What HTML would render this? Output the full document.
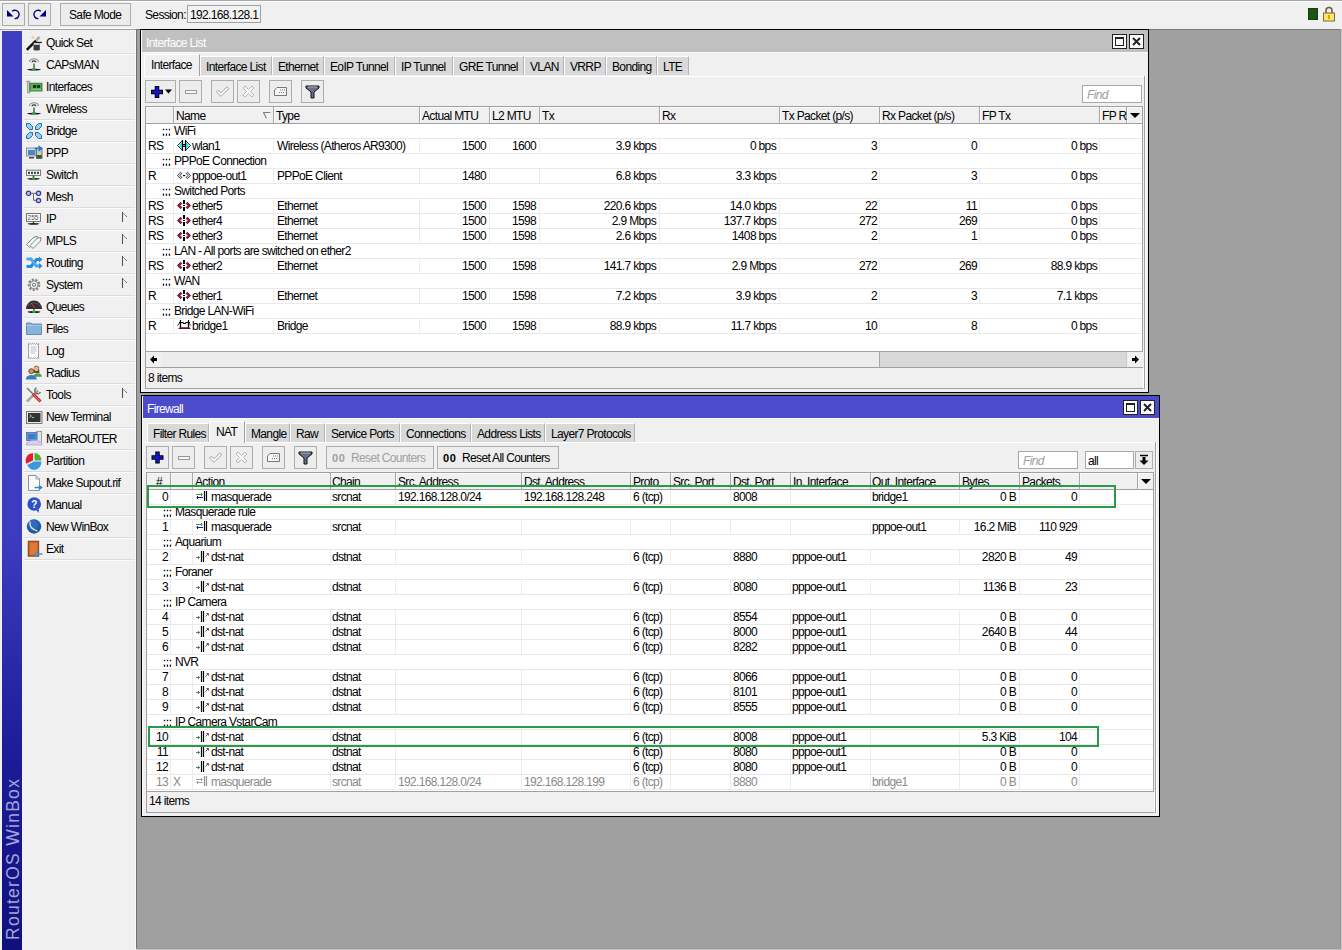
<!DOCTYPE html>
<html><head><meta charset="utf-8"><style>
html,body{margin:0;padding:0}
body{width:1342px;height:950px;overflow:hidden;position:relative;background:#f0f0f0;font-family:'Liberation Sans',sans-serif;font-size:12px;letter-spacing:-0.65px;color:#000}
body>div{position:absolute}
.t{position:absolute;white-space:nowrap;line-height:15px;height:15px}
svg{overflow:visible}
</style></head><body>
<div style="left:0px;top:0px;width:1342px;height:1px;background:#a8a8a8"></div>
<div style="left:0px;top:1px;width:1342px;height:1px;background:#ffffff"></div>
<div style="left:2px;top:3px;width:23px;height:23px;box-sizing:border-box;border:1px solid #adadad;background:#ececec;"></div>
<div style="left:28px;top:3px;width:23px;height:23px;box-sizing:border-box;border:1px solid #adadad;background:#ececec;"></div>
<div style="left:60px;top:3px;width:71px;height:23px;box-sizing:border-box;border:1px solid #adadad;background:#ececec;"></div>
<svg style="position:absolute;left:2px;top:3px" width="23" height="23" viewBox="0 0 23 23"><path d="M10.2 8.2 A4.2 4.2 0 1 1 12.6 15.6" fill="none" stroke="#000080" stroke-width="1.4"/><path d="M5 7 L5 13.5 L11.5 13.5 Z" fill="#000080"/></svg>
<svg style="position:absolute;left:28px;top:3px" width="23" height="23" viewBox="0 0 23 23"><path d="M12.8 8.2 A4.2 4.2 0 1 0 10.4 15.6" fill="none" stroke="#000080" stroke-width="1.4"/><path d="M18 7 L18 13.5 L11.5 13.5 Z" fill="#000080"/></svg>
<div class="t" style="left:69px;top:8px;">Safe Mode</div>
<div class="t" style="left:145px;top:8px;">Session:</div>
<div style="left:187px;top:5px;width:74px;height:18px;box-sizing:border-box;border:1px solid #a0a0a0;background:#f2f2f2"></div>
<div class="t" style="left:190px;top:8px;">192.168.128.1</div>
<div style="left:0px;top:28px;width:136px;height:1px;background:#ffffff"></div>
<div style="left:0px;top:29px;width:136px;height:1px;background:#a0a0a0"></div>
<div style="left:1308px;top:8px;width:10px;height:12px;background:#1f5512;border:1px solid #173d0d;box-sizing:border-box"></div>
<svg style="position:absolute;left:1322px;top:6px" width="14" height="16" viewBox="0 0 14 16"><path d="M4 7 V4.5 A3 3 0 0 1 10 4.5 V7" fill="none" stroke="#6b5a3a" stroke-width="1.5"/><rect x="1.5" y="7" width="11" height="8" fill="#ffe36a" stroke="#7a6a40" stroke-width="1"/><rect x="6" y="9" width="2" height="4" fill="#d4a800"/></svg>
<div style="left:2px;top:31px;width:20px;height:919px;background:linear-gradient(#3e3ec2 0%,#3c3cc0 55%,#1c1c98 79%,#10107c 100%)"></div>
<div class="t" style="left:2.9px;top:940px;height:20px;line-height:20px;font-size:17.5px;color:#a4a4d6;transform-origin:0 0;transform:rotate(-90deg);letter-spacing:1.28px">RouterOS WinBox</div>
<div style="left:22px;top:30px;width:114px;height:920px;background:#f0f0f0"></div>
<svg style="position:absolute;left:24px;top:33px" width="20" height="20" viewBox="0 0 20 20"><path d="M2.8 16.8 L12 7.6" stroke="#111" stroke-width="2.6"/><path d="M12.3 7.3 L15.6 4" stroke="#777" stroke-width="2.2"/><path d="M12.3 7.3 L15.6 4" stroke="#f4f4f4" stroke-width="0.9"/><path d="M9.5 10 H15.8 V17 Q12.6 18.2 9.5 17 Z" fill="#3c3c3c"/><rect x="9.7" y="10" width="6" height="1.8" fill="#e8e8e8"/><rect x="9.3" y="8.8" width="8.6" height="1.3" fill="#222"/><path d="M9 2.6 V6.4 M7.1 4.5 H10.9" stroke="#e4d470" stroke-width="1"/></svg>
<div class="t" style="left:46px;top:36px;">Quick Set</div>
<div style="left:24px;top:53px;width:111px;height:1px;background:#dcdcdc"></div>
<div style="left:24px;top:54px;width:111px;height:1px;background:#fbfbfb"></div>
<svg style="position:absolute;left:24px;top:55px" width="20" height="20" viewBox="0 0 20 20"><path d="M5.5 7 A4.5 3.2 0 0 1 14.5 7" fill="none" stroke="#8a8a8a" stroke-width="1.1"/><path d="M8 7.3 A2 1.5 0 0 1 12 7.3" fill="none" stroke="#333" stroke-width="1.2"/><path d="M10 8.5 V13.5" stroke="#5a6a5a" stroke-width="1.6"/><ellipse cx="10" cy="14.6" rx="7" ry="0.9" fill="#1a1a1a"/><ellipse cx="10" cy="14.4" rx="2" ry="1.4" fill="#3a9a4a"/></svg>
<div class="t" style="left:46px;top:58px;">CAPsMAN</div>
<div style="left:24px;top:75px;width:111px;height:1px;background:#dcdcdc"></div>
<div style="left:24px;top:76px;width:111px;height:1px;background:#fbfbfb"></div>
<svg style="position:absolute;left:24px;top:77px" width="20" height="20" viewBox="0 0 20 20"><path d="M2.8 4.2 H5.8 V16 H3.6 V5.2 H2.8 Z" fill="#d0d0d0" stroke="#808080" stroke-width="0.7"/><rect x="5.8" y="6.2" width="12.2" height="7.8" fill="#5cae5c" stroke="#2a6a2a" stroke-width="0.8"/><rect x="9" y="8" width="3.2" height="3" fill="#0a3a12"/><rect x="13" y="8" width="3.2" height="3" fill="#0a3a22"/><path d="M7.5 12.8 H17.5" stroke="#c8f080" stroke-width="1.1" stroke-dasharray="1 1"/></svg>
<div class="t" style="left:46px;top:80px;">Interfaces</div>
<div style="left:24px;top:97px;width:111px;height:1px;background:#dcdcdc"></div>
<div style="left:24px;top:98px;width:111px;height:1px;background:#fbfbfb"></div>
<svg style="position:absolute;left:24px;top:99px" width="20" height="20" viewBox="0 0 20 20"><path d="M5.5 7 A4.5 3.2 0 0 1 14.5 7" fill="none" stroke="#8a8a8a" stroke-width="1.1"/><path d="M8 7.3 A2 1.5 0 0 1 12 7.3" fill="none" stroke="#333" stroke-width="1.2"/><path d="M10 8.5 V13.5" stroke="#5a6a5a" stroke-width="1.6"/><ellipse cx="10" cy="14.6" rx="7" ry="0.9" fill="#1a1a1a"/><ellipse cx="10" cy="14.4" rx="2" ry="1.4" fill="#3a9a4a"/></svg>
<div class="t" style="left:46px;top:102px;">Wireless</div>
<div style="left:24px;top:119px;width:111px;height:1px;background:#dcdcdc"></div>
<div style="left:24px;top:120px;width:111px;height:1px;background:#fbfbfb"></div>
<svg style="position:absolute;left:24px;top:121px" width="20" height="20" viewBox="0 0 20 20"><g fill="#8ad4f8" stroke="#2a6aa8" stroke-width="1"><path d="M2.5 2.5 H5.5 L8.5 5.5 V8.5 H5.5 L2.5 5.5 Z"/><path d="M17.5 2.5 H14.5 L11.5 5.5 V8.5 H14.5 L17.5 5.5 Z"/><path d="M2.5 17.5 H5.5 L8.5 14.5 V11.5 H5.5 L2.5 14.5 Z"/><path d="M17.5 17.5 H14.5 L11.5 14.5 V11.5 H14.5 L17.5 14.5 Z"/></g></svg>
<div class="t" style="left:46px;top:124px;">Bridge</div>
<div style="left:24px;top:141px;width:111px;height:1px;background:#dcdcdc"></div>
<div style="left:24px;top:142px;width:111px;height:1px;background:#fbfbfb"></div>
<svg style="position:absolute;left:24px;top:143px" width="20" height="20" viewBox="0 0 20 20"><rect x="2.5" y="5" width="9.5" height="8" fill="#cfe0f4" stroke="#7a7a7a" stroke-width="0.8"/><rect x="4" y="7" width="7" height="5" fill="#4a86c8"/><rect x="5" y="14" width="5" height="1.5" fill="#444"/><rect x="12.5" y="5" width="5.5" height="10.5" fill="#c8d0b8" stroke="#555" stroke-width="0.8"/><rect x="12.8" y="12" width="5" height="3.3" fill="#3a5a3a"/><path d="M10.5 5.5 H17 M14.5 3 L17.5 5.5 L14.5 8" stroke="#2a78c8" stroke-width="1.6" fill="none"/></svg>
<div class="t" style="left:46px;top:146px;">PPP</div>
<div style="left:24px;top:163px;width:111px;height:1px;background:#dcdcdc"></div>
<div style="left:24px;top:164px;width:111px;height:1px;background:#fbfbfb"></div>
<svg style="position:absolute;left:24px;top:165px" width="20" height="20" viewBox="0 0 20 20"><rect x="2.5" y="5.2" width="14" height="5.2" fill="#fafafa" stroke="#777" stroke-width="1"/><g fill="#333"><rect x="4" y="6.8" width="2" height="2"/><rect x="7" y="6.8" width="2" height="2"/><rect x="10" y="6.8" width="2" height="2"/><rect x="13" y="6.8" width="2" height="2"/></g><path d="M9.5 10.5 V13.5" stroke="#1a5a1a" stroke-width="1.4"/><ellipse cx="9.5" cy="13.8" rx="6.5" ry="0.9" fill="#1a1a1a"/><ellipse cx="9.5" cy="13.6" rx="1.8" ry="1.3" fill="#3a9a4a"/></svg>
<div class="t" style="left:46px;top:168px;">Switch</div>
<div style="left:24px;top:185px;width:111px;height:1px;background:#dcdcdc"></div>
<div style="left:24px;top:186px;width:111px;height:1px;background:#fbfbfb"></div>
<svg style="position:absolute;left:24px;top:187px" width="20" height="20" viewBox="0 0 20 20"><path d="M6.5 6.3 H12.3 M9.5 6.3 V13.3 H12.3" fill="none" stroke="#6a6a6a" stroke-width="1"/><g fill="#b8c0f8" stroke="#3a3a88" stroke-width="1.2"><circle cx="4.5" cy="6.3" r="2.2"/><circle cx="14.5" cy="6.3" r="2.2"/><circle cx="14.5" cy="13.5" r="2.2"/></g></svg>
<div class="t" style="left:46px;top:190px;">Mesh</div>
<div style="left:24px;top:207px;width:111px;height:1px;background:#dcdcdc"></div>
<div style="left:24px;top:208px;width:111px;height:1px;background:#fbfbfb"></div>
<svg style="position:absolute;left:24px;top:209px" width="20" height="20" viewBox="0 0 20 20"><rect x="2.5" y="4.5" width="14" height="8" fill="#fafafa" stroke="#777" stroke-width="1"/><text x="3.6" y="11" font-size="6.5" font-family="Liberation Sans" fill="#555" letter-spacing="0">255</text><path d="M9.5 12.5 V14.5" stroke="#1a5a1a" stroke-width="1.3"/><ellipse cx="9.5" cy="14.8" rx="6" ry="0.9" fill="#1a1a1a"/></svg>
<div class="t" style="left:46px;top:212px;">IP</div>
<svg style="position:absolute;left:121px;top:212px" width="8" height="11" viewBox="0 0 8 11"><path d="M1.5 0 V10" stroke="#555" stroke-width="1.1" fill="none"/><path d="M1.5 0.5 L6.2 5.2" stroke="#555" stroke-width="1" fill="none" stroke-dasharray="1.2 0.5"/></svg>
<div style="left:24px;top:229px;width:111px;height:1px;background:#dcdcdc"></div>
<div style="left:24px;top:230px;width:111px;height:1px;background:#fbfbfb"></div>
<svg style="position:absolute;left:24px;top:231px" width="20" height="20" viewBox="0 0 20 20"><g fill="#f4f8f4" stroke="#777" stroke-width="0.9"><path d="M2.5 13.5 L10 6 L13.5 5.5 L13 9 L5.5 16.5 Z"/><path d="M6 17 L13.5 9.5 L17 9 L16.5 12.5 L9 20 Z" transform="translate(0,-2.5)"/></g></svg>
<div class="t" style="left:46px;top:234px;">MPLS</div>
<svg style="position:absolute;left:121px;top:234px" width="8" height="11" viewBox="0 0 8 11"><path d="M1.5 0 V10" stroke="#555" stroke-width="1.1" fill="none"/><path d="M1.5 0.5 L6.2 5.2" stroke="#555" stroke-width="1" fill="none" stroke-dasharray="1.2 0.5"/></svg>
<div style="left:24px;top:251px;width:111px;height:1px;background:#dcdcdc"></div>
<div style="left:24px;top:252px;width:111px;height:1px;background:#fbfbfb"></div>
<svg style="position:absolute;left:24px;top:253px" width="20" height="20" viewBox="0 0 20 20"><path d="M2.5 13.5 L7 13.5 L12.5 6.5 L16 6.5" fill="none" stroke="#2a88d8" stroke-width="3"/><path d="M2.5 6 L7 6 L12.5 13 L16 13" fill="none" stroke="#48a8f0" stroke-width="3"/><path d="M15 3.5 L18.5 6.5 L15 9.5 Z M15 10 L18.5 13 L15 16 Z" fill="#2a88d8"/></svg>
<div class="t" style="left:46px;top:256px;">Routing</div>
<svg style="position:absolute;left:121px;top:256px" width="8" height="11" viewBox="0 0 8 11"><path d="M1.5 0 V10" stroke="#555" stroke-width="1.1" fill="none"/><path d="M1.5 0.5 L6.2 5.2" stroke="#555" stroke-width="1" fill="none" stroke-dasharray="1.2 0.5"/></svg>
<div style="left:24px;top:273px;width:111px;height:1px;background:#dcdcdc"></div>
<div style="left:24px;top:274px;width:111px;height:1px;background:#fbfbfb"></div>
<svg style="position:absolute;left:24px;top:275px" width="20" height="20" viewBox="0 0 20 20"><circle cx="10" cy="9.8" r="5.2" fill="#f0f0f0" stroke="#888" stroke-width="2.2" stroke-dasharray="2.2 1.4"/><circle cx="10" cy="9.8" r="4" fill="none" stroke="#777" stroke-width="0.8"/><circle cx="10" cy="9.8" r="1.6" fill="#f4f4f4" stroke="#666" stroke-width="0.9"/></svg>
<div class="t" style="left:46px;top:278px;">System</div>
<svg style="position:absolute;left:121px;top:278px" width="8" height="11" viewBox="0 0 8 11"><path d="M1.5 0 V10" stroke="#555" stroke-width="1.1" fill="none"/><path d="M1.5 0.5 L6.2 5.2" stroke="#555" stroke-width="1" fill="none" stroke-dasharray="1.2 0.5"/></svg>
<div style="left:24px;top:295px;width:111px;height:1px;background:#dcdcdc"></div>
<div style="left:24px;top:296px;width:111px;height:1px;background:#fbfbfb"></div>
<svg style="position:absolute;left:24px;top:297px" width="20" height="20" viewBox="0 0 20 20"><path d="M2 12 A8 8.5 0 0 1 18 12 Z" fill="#3a2c32"/><path d="M4.5 9 A6 5 0 0 1 15.5 9" fill="none" stroke="#8a8a9a" stroke-width="0.8" stroke-dasharray="1 1"/><path d="M7 6 L11 11" stroke="#c04050" stroke-width="1"/><path d="M10 12 V14.5" stroke="#2a8a3a" stroke-width="1.5"/><ellipse cx="10" cy="15" rx="6.5" ry="0.9" fill="#1a1a1a"/><ellipse cx="10" cy="14.7" rx="1.8" ry="1.2" fill="#3aaa4a"/></svg>
<div class="t" style="left:46px;top:300px;">Queues</div>
<div style="left:24px;top:317px;width:111px;height:1px;background:#dcdcdc"></div>
<div style="left:24px;top:318px;width:111px;height:1px;background:#fbfbfb"></div>
<svg style="position:absolute;left:24px;top:319px" width="20" height="20" viewBox="0 0 20 20"><path d="M2.5 4 H7 L8 5 H17.5 V15.5 H2.5 Z" fill="#88b4dc" stroke="#5a84b0" stroke-width="0.9"/><path d="M2.5 6.5 H17.5" stroke="#a8cce8" stroke-width="0.8"/></svg>
<div class="t" style="left:46px;top:322px;">Files</div>
<div style="left:24px;top:339px;width:111px;height:1px;background:#dcdcdc"></div>
<div style="left:24px;top:340px;width:111px;height:1px;background:#fbfbfb"></div>
<svg style="position:absolute;left:24px;top:341px" width="20" height="20" viewBox="0 0 20 20"><path d="M4.5 2.5 L5.5 3.3 L6.5 2.5 L7.5 3.3 L8.5 2.5 L9.5 3.3 L10.5 2.5 L11.5 3.3 L12.5 2.5 L13.5 3.3 L14.5 2.5 V17.5 L13.5 16.7 L12.5 17.5 L11.5 16.7 L10.5 17.5 L9.5 16.7 L8.5 17.5 L7.5 16.7 L6.5 17.5 L5.5 16.7 L4.5 17.5 Z" fill="#fafafa" stroke="#8a8a8a" stroke-width="0.8"/><path d="M6.5 6 H12.5 M6.5 8 H12.5 M6.5 10 H12.5 M6.5 12 H11" stroke="#b8b8c8" stroke-width="0.9"/></svg>
<div class="t" style="left:46px;top:344px;">Log</div>
<div style="left:24px;top:361px;width:111px;height:1px;background:#dcdcdc"></div>
<div style="left:24px;top:362px;width:111px;height:1px;background:#fbfbfb"></div>
<svg style="position:absolute;left:24px;top:363px" width="20" height="20" viewBox="0 0 20 20"><path d="M10 4 A3 3.2 0 0 1 15 4.5 L15.5 10 H9.5 Z" fill="#7a4a2a"/><circle cx="12.3" cy="5.8" r="2.3" fill="#e8b888"/><path d="M9.5 13.8 A4 3.5 0 0 1 17.8 13.8 Z" fill="#3aaa5a"/><circle cx="7.3" cy="8.2" r="2.5" fill="#c89868" stroke="#5a3a1a" stroke-width="0.8"/><path d="M1.8 16.5 A5.5 4.5 0 0 1 12.8 16.5 Z" fill="#3a7ac0"/></svg>
<div class="t" style="left:46px;top:366px;">Radius</div>
<div style="left:24px;top:383px;width:111px;height:1px;background:#dcdcdc"></div>
<div style="left:24px;top:384px;width:111px;height:1px;background:#fbfbfb"></div>
<svg style="position:absolute;left:24px;top:385px" width="20" height="20" viewBox="0 0 20 20"><path d="M3 16.5 L14 5.5" stroke="#777" stroke-width="2.2"/><path d="M3 16.5 L14 5.5" stroke="#f0f0f0" stroke-width="0.8"/><path d="M12.5 3 A3 3 0 1 0 16.5 7" fill="none" stroke="#777" stroke-width="1.6"/><path d="M3 3 L9 9" stroke="#777" stroke-width="1.5"/><path d="M9 9 L16.5 16.5" stroke="#d02828" stroke-width="3"/><path d="M9.5 9.5 L16 16" stroke="#f08080" stroke-width="0.8"/></svg>
<div class="t" style="left:46px;top:388px;">Tools</div>
<svg style="position:absolute;left:121px;top:388px" width="8" height="11" viewBox="0 0 8 11"><path d="M1.5 0 V10" stroke="#555" stroke-width="1.1" fill="none"/><path d="M1.5 0.5 L6.2 5.2" stroke="#555" stroke-width="1" fill="none" stroke-dasharray="1.2 0.5"/></svg>
<div style="left:24px;top:405px;width:111px;height:1px;background:#dcdcdc"></div>
<div style="left:24px;top:406px;width:111px;height:1px;background:#fbfbfb"></div>
<svg style="position:absolute;left:24px;top:407px" width="20" height="20" viewBox="0 0 20 20"><rect x="2.5" y="4.5" width="15.5" height="12" fill="#e8e8e8" stroke="#7a7a7a" stroke-width="1"/><rect x="4" y="6" width="12.5" height="9" fill="#333"/><path d="M5.5 7.5 L7.5 9 L5.5 10.5 M8 10.5 H10" stroke="#ddd" stroke-width="0.8" fill="none"/></svg>
<div class="t" style="left:46px;top:410px;">New Terminal</div>
<div style="left:24px;top:427px;width:111px;height:1px;background:#dcdcdc"></div>
<div style="left:24px;top:428px;width:111px;height:1px;background:#fbfbfb"></div>
<svg style="position:absolute;left:24px;top:429px" width="20" height="20" viewBox="0 0 20 20"><rect x="12.8" y="2.5" width="4.8" height="12" fill="#e4e4e4" stroke="#888" stroke-width="0.8"/><rect x="2.5" y="3.5" width="10.5" height="8" fill="#5a9ae0" stroke="#5a6a8a" stroke-width="0.8"/><rect x="4" y="5" width="7.5" height="5" fill="#3a7ad0"/><path d="M2 16 Q2 12.5 5.5 12.8 Q7 10.5 10 11.5 Q13 10 15 12.5 Q18.5 12.5 18 16 Z" fill="#d8d0f0" stroke="#a8a0c8" stroke-width="0.7"/></svg>
<div class="t" style="left:46px;top:432px;">MetaROUTER</div>
<div style="left:24px;top:449px;width:111px;height:1px;background:#dcdcdc"></div>
<div style="left:24px;top:450px;width:111px;height:1px;background:#fbfbfb"></div>
<svg style="position:absolute;left:24px;top:451px" width="20" height="20" viewBox="0 0 20 20"><path d="M9 9.5 L9 2.2 A7.3 7.3 0 0 0 2.4 12.8 Z" fill="#e02030"/><path d="M10.5 8.5 L10.5 2 A7 7 0 0 1 17.3 9.5 L10.5 9.5 Z" fill="#50b030"/><path d="M10 10.5 L17.3 10.5 A7.3 7.3 0 0 1 3.2 14 Z" fill="#3a98e0"/></svg>
<div class="t" style="left:46px;top:454px;">Partition</div>
<div style="left:24px;top:471px;width:111px;height:1px;background:#dcdcdc"></div>
<div style="left:24px;top:472px;width:111px;height:1px;background:#fbfbfb"></div>
<svg style="position:absolute;left:24px;top:473px" width="20" height="20" viewBox="0 0 20 20"><path d="M4.5 2.5 H12 L15.5 6 V17.5 H4.5 Z" fill="#fafafa" stroke="#7a8a9a" stroke-width="0.9"/><path d="M12 2.5 V6 H15.5" fill="none" stroke="#7a8a9a" stroke-width="0.8"/><path d="M10.5 14.5 H17 M15 12.5 L17.5 14.5 L15 16.5" stroke="#2a88d8" stroke-width="1.6" fill="none"/></svg>
<div class="t" style="left:46px;top:476px;">Make Supout.rif</div>
<div style="left:24px;top:493px;width:111px;height:1px;background:#dcdcdc"></div>
<div style="left:24px;top:494px;width:111px;height:1px;background:#fbfbfb"></div>
<svg style="position:absolute;left:24px;top:495px" width="20" height="20" viewBox="0 0 20 20"><path d="M12.5 15 L14.5 18 L15 14 Z" fill="#2a48c0"/><circle cx="10.2" cy="9" r="6.8" fill="#3050c8"/><text x="7.2" y="13" font-size="10" font-weight="bold" font-family="Liberation Sans" fill="#fff" letter-spacing="0">?</text></svg>
<div class="t" style="left:46px;top:498px;">Manual</div>
<div style="left:24px;top:515px;width:111px;height:1px;background:#dcdcdc"></div>
<div style="left:24px;top:516px;width:111px;height:1px;background:#fbfbfb"></div>
<svg style="position:absolute;left:24px;top:517px" width="20" height="20" viewBox="0 0 20 20"><circle cx="10" cy="9.5" r="7.2" fill="#1e5aa8"/><circle cx="9" cy="8" r="5" fill="#3a7ac8" opacity="0.6"/><path d="M6 4.5 Q5 12 13.5 14" stroke="#e0ecf8" stroke-width="1.2" fill="none"/></svg>
<div class="t" style="left:46px;top:520px;">New WinBox</div>
<div style="left:24px;top:537px;width:111px;height:1px;background:#dcdcdc"></div>
<div style="left:24px;top:538px;width:111px;height:1px;background:#fbfbfb"></div>
<svg style="position:absolute;left:24px;top:539px" width="20" height="20" viewBox="0 0 20 20"><rect x="4.2" y="2.2" width="10.5" height="15" fill="#c86428" stroke="#7a3a10" stroke-width="0.9"/><rect x="6" y="4" width="7" height="11.5" fill="#e07838"/><path d="M11 15 H18.5 M13 13 L10.8 15 L13 17" stroke="#3a98e0" stroke-width="1.6" fill="none"/></svg>
<div class="t" style="left:46px;top:542px;">Exit</div>
<div style="left:24px;top:559px;width:111px;height:1px;background:#dcdcdc"></div>
<div style="left:24px;top:560px;width:111px;height:1px;background:#fbfbfb"></div>
<div style="left:136px;top:29px;width:1206px;height:921px;background:#a0a0a0"></div>
<div style="left:136px;top:29px;width:1px;height:921px;background:#707070"></div>
<div style="left:135px;top:30px;width:1px;height:920px;background:#fafafa"></div>
<div style="left:136px;top:29px;width:1206px;height:1px;background:#787878"></div>
<div style="left:1340px;top:29px;width:1px;height:920px;background:#989898"></div>
<div style="left:1341px;top:29px;width:1px;height:921px;background:#c6c6c6"></div>
<div style="left:136px;top:948px;width:1205px;height:1px;background:#989898"></div>
<div style="left:136px;top:949px;width:1206px;height:1px;background:#c2c2c2"></div>
<div style="left:140px;top:29px;width:1009px;height:364px;background:#000"></div>
<div style="left:141px;top:30px;width:1007px;height:362px;background:#f0f0f0"></div>
<div style="left:141px;top:30px;width:1px;height:362px;background:#fbfbfb"></div>
<div style="left:142px;top:30px;width:1006px;height:22px;background:#c0c0c0"></div>
<div style="left:141px;top:52px;width:1007px;height:1px;background:#fafafa"></div>
<div class="t" style="left:146px;top:36px;color:#ffffff">Interface List</div>
<div style="left:1112px;top:34px;width:15px;height:15px;box-sizing:border-box;border:1px solid #222;background:#fafafa"></div>
<div style="left:1129px;top:34px;width:15px;height:15px;box-sizing:border-box;border:1px solid #222;background:#fafafa"></div>
<svg style="position:absolute;left:1112px;top:34px" width="15" height="15" viewBox="0 0 15 15"><rect x="3.5" y="3.5" width="8" height="8" fill="none" stroke="#222" stroke-width="1"/><rect x="3" y="3" width="9" height="2" fill="#222"/></svg>
<svg style="position:absolute;left:1129px;top:34px" width="15" height="15" viewBox="0 0 15 15"><path d="M4 4 L11 11 M11 4 L4 11" stroke="#222" stroke-width="2"/></svg>
<div style="left:144px;top:76px;width:1001px;height:1px;background:#ffffff"></div>
<div style="left:1144px;top:76px;width:1px;height:313px;background:#a0a0a0"></div>
<div style="left:1145px;top:76px;width:1px;height:313px;background:#ffffff"></div>
<div style="left:144px;top:54px;width:56px;height:22px;background:#f0f0f0;box-sizing:border-box;border-left:1px solid #fff;border-top:1px solid #fff;border-right:1px solid #a0a0a0"></div>
<div class="t" style="left:151px;top:58px;">Interface</div>
<div style="left:200px;top:56px;width:72px;height:19px;background:#d9d9d9;box-sizing:border-box;border-left:1px solid #fff;border-top:1px solid #fff;border-right:1px solid #b4b4b4"></div>
<div class="t" style="left:206px;top:60px;">Interface List</div>
<div style="left:272px;top:56px;width:52px;height:19px;background:#d9d9d9;box-sizing:border-box;border-left:1px solid #fff;border-top:1px solid #fff;border-right:1px solid #b4b4b4"></div>
<div class="t" style="left:278px;top:60px;">Ethernet</div>
<div style="left:324px;top:56px;width:71px;height:19px;background:#d9d9d9;box-sizing:border-box;border-left:1px solid #fff;border-top:1px solid #fff;border-right:1px solid #b4b4b4"></div>
<div class="t" style="left:330px;top:60px;">EoIP Tunnel</div>
<div style="left:395px;top:56px;width:58px;height:19px;background:#d9d9d9;box-sizing:border-box;border-left:1px solid #fff;border-top:1px solid #fff;border-right:1px solid #b4b4b4"></div>
<div class="t" style="left:401px;top:60px;">IP Tunnel</div>
<div style="left:453px;top:56px;width:71px;height:19px;background:#d9d9d9;box-sizing:border-box;border-left:1px solid #fff;border-top:1px solid #fff;border-right:1px solid #b4b4b4"></div>
<div class="t" style="left:459px;top:60px;">GRE Tunnel</div>
<div style="left:524px;top:56px;width:40px;height:19px;background:#d9d9d9;box-sizing:border-box;border-left:1px solid #fff;border-top:1px solid #fff;border-right:1px solid #b4b4b4"></div>
<div class="t" style="left:530px;top:60px;">VLAN</div>
<div style="left:564px;top:56px;width:42px;height:19px;background:#d9d9d9;box-sizing:border-box;border-left:1px solid #fff;border-top:1px solid #fff;border-right:1px solid #b4b4b4"></div>
<div class="t" style="left:570px;top:60px;">VRRP</div>
<div style="left:606px;top:56px;width:51px;height:19px;background:#d9d9d9;box-sizing:border-box;border-left:1px solid #fff;border-top:1px solid #fff;border-right:1px solid #b4b4b4"></div>
<div class="t" style="left:612px;top:60px;">Bonding</div>
<div style="left:657px;top:56px;width:32px;height:19px;background:#d9d9d9;box-sizing:border-box;border-left:1px solid #fff;border-top:1px solid #fff;border-right:1px solid #b4b4b4"></div>
<div class="t" style="left:663px;top:60px;">LTE</div>
<div style="left:145px;top:80px;width:31px;height:23px;box-sizing:border-box;border:1px solid #adadad;background:#ededed"></div>
<svg style="position:absolute;left:145px;top:80px" width="31" height="23" viewBox="0 0 31 23"><path d="M12 6 V18 M6 12 H18" stroke="#000" stroke-width="4.5"/><path d="M12 7 V17 M7 12 H17" stroke="#1414d8" stroke-width="2.5"/><path d="M20 9.5 H27 L23.5 13.5 Z" fill="#000"/></svg>
<div style="left:179px;top:80px;width:23px;height:23px;box-sizing:border-box;border:1px solid #adadad;background:#ededed"></div>
<svg style="position:absolute;left:179px;top:80px" width="23" height="23" viewBox="0 0 23 23"><rect x="6.5" y="10.5" width="11" height="3" fill="#f6f6f6" stroke="#9a9a9a"/></svg>
<div style="left:211px;top:80px;width:23px;height:23px;box-sizing:border-box;border:1px solid #adadad;background:#ededed"></div>
<svg style="position:absolute;left:211px;top:80px" width="23" height="23" viewBox="0 0 23 23"><path d="M5.5 12 L7.3 10.2 L10 12.8 L16 6.8 L17.8 8.6 L10 16.4 Z" fill="#f8f8f8" stroke="#9a9a9a" stroke-width="0.9"/></svg>
<div style="left:237px;top:80px;width:23px;height:23px;box-sizing:border-box;border:1px solid #adadad;background:#ededed"></div>
<svg style="position:absolute;left:237px;top:80px" width="23" height="23" viewBox="0 0 23 23"><path d="M6 8 L8 6 L11.5 9.5 L15 6 L17 8 L13.5 11.5 L17 15 L15 17 L11.5 13.5 L8 17 L6 15 L9.5 11.5 Z" fill="#f6f6f6" stroke="#a8a8a8" stroke-width="0.8"/></svg>
<div style="left:269px;top:80px;width:23px;height:23px;box-sizing:border-box;border:1px solid #adadad;background:#ededed"></div>
<svg style="position:absolute;left:269px;top:80px" width="23" height="23" viewBox="0 0 23 23"><path d="M5.5 10 L8 7.5 H17.5 V15.5 H5.5 Z" fill="#f6f6f6" stroke="#777"/><path d="M11 10 H16 M10 12.5 H15" stroke="#777" stroke-dasharray="1 1"/></svg>
<div style="left:301px;top:80px;width:23px;height:23px;box-sizing:border-box;border:1px solid #adadad;background:#ededed"></div>
<svg style="position:absolute;left:301px;top:80px" width="23" height="23" viewBox="0 0 23 23"><path d="M5 6 H18 V8 L13 12 V18 H10 V12 L5 8 Z" fill="#6a7088" stroke="#111" stroke-width="1"/><path d="M7 7 H16" stroke="#aab" stroke-width="1"/></svg>
<div style="left:1082px;top:85px;width:60px;height:18px;box-sizing:border-box;border:1px solid #a8a8a8;background:#fff"></div>
<div class="t" style="left:1087px;top:88px;color:#a0a0a0;font-style:italic">Find</div>
<div style="left:145px;top:106px;width:998px;height:246px;background:#fff;box-sizing:border-box;border:1px solid #a0a0a0;border-right:none"></div>
<div style="left:145px;top:106px;width:998px;height:18px;background:#f0f0f0;box-sizing:border-box;border-top:1px solid #a0a0a0;border-bottom:1px solid #a0a0a0;border-left:1px solid #a0a0a0"></div>
<div style="left:1142px;top:106px;width:1px;height:246px;background:#a0a0a0"></div>
<div style="left:146px;top:107px;width:996px;height:1px;background:#fcfcfc"></div>
<div style="left:173px;top:107px;width:1px;height:16px;background:#a8a8a8"></div>
<div style="left:174px;top:108px;width:1px;height:15px;background:#fafafa"></div>
<div style="left:273px;top:107px;width:1px;height:16px;background:#a8a8a8"></div>
<div style="left:274px;top:108px;width:1px;height:15px;background:#fafafa"></div>
<div style="left:419px;top:107px;width:1px;height:16px;background:#a8a8a8"></div>
<div style="left:420px;top:108px;width:1px;height:15px;background:#fafafa"></div>
<div style="left:489px;top:107px;width:1px;height:16px;background:#a8a8a8"></div>
<div style="left:490px;top:108px;width:1px;height:15px;background:#fafafa"></div>
<div style="left:539px;top:107px;width:1px;height:16px;background:#a8a8a8"></div>
<div style="left:540px;top:108px;width:1px;height:15px;background:#fafafa"></div>
<div style="left:659px;top:107px;width:1px;height:16px;background:#a8a8a8"></div>
<div style="left:660px;top:108px;width:1px;height:15px;background:#fafafa"></div>
<div style="left:779px;top:107px;width:1px;height:16px;background:#a8a8a8"></div>
<div style="left:780px;top:108px;width:1px;height:15px;background:#fafafa"></div>
<div style="left:879px;top:107px;width:1px;height:16px;background:#a8a8a8"></div>
<div style="left:880px;top:108px;width:1px;height:15px;background:#fafafa"></div>
<div style="left:979px;top:107px;width:1px;height:16px;background:#a8a8a8"></div>
<div style="left:980px;top:108px;width:1px;height:15px;background:#fafafa"></div>
<div style="left:1099px;top:107px;width:1px;height:16px;background:#a8a8a8"></div>
<div style="left:1100px;top:108px;width:1px;height:15px;background:#fafafa"></div>
<div style="left:1126px;top:107px;width:1px;height:16px;background:#a8a8a8"></div>
<div style="left:1127px;top:108px;width:1px;height:15px;background:#fafafa"></div>
<div class="t" style="left:176px;top:109px;">Name</div>
<div class="t" style="left:276px;top:109px;">Type</div>
<div class="t" style="left:422px;top:109px;">Actual MTU</div>
<div class="t" style="left:492px;top:109px;">L2 MTU</div>
<div class="t" style="left:542px;top:109px;">Tx</div>
<div class="t" style="left:662px;top:109px;">Rx</div>
<div class="t" style="left:782px;top:109px;">Tx Packet (p/s)</div>
<div class="t" style="left:882px;top:109px;">Rx Packet (p/s)</div>
<div class="t" style="left:982px;top:109px;">FP Tx</div>
<div class="t" style="left:1102px;top:109px;">FP R</div>
<svg style="position:absolute;left:1127px;top:107px" width="15" height="16" viewBox="0 0 15 16"><path d="M3.0 6 H13.0 L8.0 11 Z" fill="#000"/></svg>
<div style="left:146px;top:138px;width:996px;height:1px;background:#e9e9e9"></div>
<svg style="position:absolute;left:162px;top:128px" width="10" height="9" viewBox="0 0 10 9"><rect x="0.8" y="0.8" width="1.4" height="1.4" fill="#111"/><rect x="0.8" y="5.6" width="1.3" height="2.2" fill="#111"/><rect x="3.8" y="0.8" width="1.4" height="1.4" fill="#111"/><rect x="3.8" y="5.6" width="1.3" height="2.2" fill="#111"/><rect x="6.8" y="0.8" width="1.4" height="1.4" fill="#111"/><rect x="6.8" y="5.6" width="1.3" height="2.2" fill="#111"/></svg>
<div class="t" style="left:174px;top:124px;">WiFi</div>
<div style="left:146px;top:153px;width:996px;height:1px;background:#e9e9e9"></div>
<div style="left:173px;top:139px;width:1px;height:14px;background:#ececec"></div>
<div style="left:273px;top:139px;width:1px;height:14px;background:#ececec"></div>
<div style="left:419px;top:139px;width:1px;height:14px;background:#ececec"></div>
<div style="left:489px;top:139px;width:1px;height:14px;background:#ececec"></div>
<div style="left:539px;top:139px;width:1px;height:14px;background:#ececec"></div>
<div style="left:659px;top:139px;width:1px;height:14px;background:#ececec"></div>
<div style="left:779px;top:139px;width:1px;height:14px;background:#ececec"></div>
<div style="left:879px;top:139px;width:1px;height:14px;background:#ececec"></div>
<div style="left:979px;top:139px;width:1px;height:14px;background:#ececec"></div>
<div style="left:1099px;top:139px;width:1px;height:14px;background:#ececec"></div>
<div class="t" style="left:148px;top:139px;">RS</div>
<div class="t" style="left:192px;top:139px;">wlan1</div>
<svg style="position:absolute;left:177px;top:138px" width="14" height="15" viewBox="0 0 14 15"><path d="M1.6 7.5 L5 4 V11 Z M12.4 7.5 L9 4 V11 Z" fill="#30e8d8"/><rect x="5.5" y="6.5" width="3" height="2" fill="#40c8f0"/><path d="M0.5 7.5 L5.5 2.5 M0.5 7.5 L5.5 12.5 M13.5 7.5 L8.5 2.5 M13.5 7.5 L8.5 12.5" stroke="#000" stroke-width="0.8"/><path d="M5.5 2 V13 M8.5 2 V13" stroke="#000" stroke-width="1.2"/><path d="M6 6.5 H8 M6 8.5 H8" stroke="#001050" stroke-width="1"/></svg>
<div class="t" style="left:277px;top:139px;">Wireless (Atheros AR9300)</div>
<div class="t" style="right:856px;top:139px;">1500</div>
<div class="t" style="right:806px;top:139px;">1600</div>
<div class="t" style="right:686px;top:139px;">3.9 kbps</div>
<div class="t" style="right:566px;top:139px;">0 bps</div>
<div class="t" style="right:465px;top:139px;">3</div>
<div class="t" style="right:365px;top:139px;">0</div>
<div class="t" style="right:245px;top:139px;">0 bps</div>
<div style="left:146px;top:168px;width:996px;height:1px;background:#e9e9e9"></div>
<svg style="position:absolute;left:162px;top:158px" width="10" height="9" viewBox="0 0 10 9"><rect x="0.8" y="0.8" width="1.4" height="1.4" fill="#111"/><rect x="0.8" y="5.6" width="1.3" height="2.2" fill="#111"/><rect x="3.8" y="0.8" width="1.4" height="1.4" fill="#111"/><rect x="3.8" y="5.6" width="1.3" height="2.2" fill="#111"/><rect x="6.8" y="0.8" width="1.4" height="1.4" fill="#111"/><rect x="6.8" y="5.6" width="1.3" height="2.2" fill="#111"/></svg>
<div class="t" style="left:174px;top:154px;">PPPoE Connection</div>
<div style="left:146px;top:183px;width:996px;height:1px;background:#e9e9e9"></div>
<div style="left:173px;top:169px;width:1px;height:14px;background:#ececec"></div>
<div style="left:273px;top:169px;width:1px;height:14px;background:#ececec"></div>
<div style="left:419px;top:169px;width:1px;height:14px;background:#ececec"></div>
<div style="left:489px;top:169px;width:1px;height:14px;background:#ececec"></div>
<div style="left:539px;top:169px;width:1px;height:14px;background:#ececec"></div>
<div style="left:659px;top:169px;width:1px;height:14px;background:#ececec"></div>
<div style="left:779px;top:169px;width:1px;height:14px;background:#ececec"></div>
<div style="left:879px;top:169px;width:1px;height:14px;background:#ececec"></div>
<div style="left:979px;top:169px;width:1px;height:14px;background:#ececec"></div>
<div style="left:1099px;top:169px;width:1px;height:14px;background:#ececec"></div>
<div class="t" style="left:148px;top:169px;">R</div>
<div class="t" style="left:192px;top:169px;">pppoe-out1</div>
<svg style="position:absolute;left:177px;top:168px" width="14" height="15" viewBox="0 0 14 15"><path d="M0.4 7.5 L3.5 4.3 L4.9 5.5 L3 7.5 L4.9 9.5 L3.5 10.7 Z M13.6 7.5 L10.5 4.3 L9.1 5.5 L11 7.5 L9.1 9.5 L10.5 10.7 Z" fill="#dcd8f4" stroke="#000" stroke-width="0.7"/><rect x="6" y="7" width="2.2" height="1.2" fill="#000"/></svg>
<div class="t" style="left:277px;top:169px;">PPPoE Client</div>
<div class="t" style="right:856px;top:169px;">1480</div>
<div class="t" style="right:806px;top:169px;"></div>
<div class="t" style="right:686px;top:169px;">6.8 kbps</div>
<div class="t" style="right:566px;top:169px;">3.3 kbps</div>
<div class="t" style="right:465px;top:169px;">2</div>
<div class="t" style="right:365px;top:169px;">3</div>
<div class="t" style="right:245px;top:169px;">0 bps</div>
<div style="left:146px;top:198px;width:996px;height:1px;background:#e9e9e9"></div>
<svg style="position:absolute;left:162px;top:188px" width="10" height="9" viewBox="0 0 10 9"><rect x="0.8" y="0.8" width="1.4" height="1.4" fill="#111"/><rect x="0.8" y="5.6" width="1.3" height="2.2" fill="#111"/><rect x="3.8" y="0.8" width="1.4" height="1.4" fill="#111"/><rect x="3.8" y="5.6" width="1.3" height="2.2" fill="#111"/><rect x="6.8" y="0.8" width="1.4" height="1.4" fill="#111"/><rect x="6.8" y="5.6" width="1.3" height="2.2" fill="#111"/></svg>
<div class="t" style="left:174px;top:184px;">Switched Ports</div>
<div style="left:146px;top:213px;width:996px;height:1px;background:#e9e9e9"></div>
<div style="left:173px;top:199px;width:1px;height:14px;background:#ececec"></div>
<div style="left:273px;top:199px;width:1px;height:14px;background:#ececec"></div>
<div style="left:419px;top:199px;width:1px;height:14px;background:#ececec"></div>
<div style="left:489px;top:199px;width:1px;height:14px;background:#ececec"></div>
<div style="left:539px;top:199px;width:1px;height:14px;background:#ececec"></div>
<div style="left:659px;top:199px;width:1px;height:14px;background:#ececec"></div>
<div style="left:779px;top:199px;width:1px;height:14px;background:#ececec"></div>
<div style="left:879px;top:199px;width:1px;height:14px;background:#ececec"></div>
<div style="left:979px;top:199px;width:1px;height:14px;background:#ececec"></div>
<div style="left:1099px;top:199px;width:1px;height:14px;background:#ececec"></div>
<div class="t" style="left:148px;top:199px;">RS</div>
<div class="t" style="left:192px;top:199px;">ether5</div>
<svg style="position:absolute;left:177px;top:198px" width="14" height="15" viewBox="0 0 14 15"><path d="M0.4 7.5 L3.5 4.3 L4.9 5.5 L3 7.5 L4.9 9.5 L3.5 10.7 Z M13.6 7.5 L10.5 4.3 L9.1 5.5 L11 7.5 L9.1 9.5 L10.5 10.7 Z" fill="#b01840" stroke="#200008" stroke-width="0.7"/><rect x="6" y="2" width="2" height="4" fill="#000"/><rect x="6" y="7" width="2" height="1" fill="#000"/><rect x="6" y="9" width="2" height="4" fill="#000"/></svg>
<div class="t" style="left:277px;top:199px;">Ethernet</div>
<div class="t" style="right:856px;top:199px;">1500</div>
<div class="t" style="right:806px;top:199px;">1598</div>
<div class="t" style="right:686px;top:199px;">220.6 kbps</div>
<div class="t" style="right:566px;top:199px;">14.0 kbps</div>
<div class="t" style="right:465px;top:199px;">22</div>
<div class="t" style="right:365px;top:199px;">11</div>
<div class="t" style="right:245px;top:199px;">0 bps</div>
<div style="left:146px;top:228px;width:996px;height:1px;background:#e9e9e9"></div>
<div style="left:173px;top:214px;width:1px;height:14px;background:#ececec"></div>
<div style="left:273px;top:214px;width:1px;height:14px;background:#ececec"></div>
<div style="left:419px;top:214px;width:1px;height:14px;background:#ececec"></div>
<div style="left:489px;top:214px;width:1px;height:14px;background:#ececec"></div>
<div style="left:539px;top:214px;width:1px;height:14px;background:#ececec"></div>
<div style="left:659px;top:214px;width:1px;height:14px;background:#ececec"></div>
<div style="left:779px;top:214px;width:1px;height:14px;background:#ececec"></div>
<div style="left:879px;top:214px;width:1px;height:14px;background:#ececec"></div>
<div style="left:979px;top:214px;width:1px;height:14px;background:#ececec"></div>
<div style="left:1099px;top:214px;width:1px;height:14px;background:#ececec"></div>
<div class="t" style="left:148px;top:214px;">RS</div>
<div class="t" style="left:192px;top:214px;">ether4</div>
<svg style="position:absolute;left:177px;top:213px" width="14" height="15" viewBox="0 0 14 15"><path d="M0.4 7.5 L3.5 4.3 L4.9 5.5 L3 7.5 L4.9 9.5 L3.5 10.7 Z M13.6 7.5 L10.5 4.3 L9.1 5.5 L11 7.5 L9.1 9.5 L10.5 10.7 Z" fill="#b01840" stroke="#200008" stroke-width="0.7"/><rect x="6" y="2" width="2" height="4" fill="#000"/><rect x="6" y="7" width="2" height="1" fill="#000"/><rect x="6" y="9" width="2" height="4" fill="#000"/></svg>
<div class="t" style="left:277px;top:214px;">Ethernet</div>
<div class="t" style="right:856px;top:214px;">1500</div>
<div class="t" style="right:806px;top:214px;">1598</div>
<div class="t" style="right:686px;top:214px;">2.9 Mbps</div>
<div class="t" style="right:566px;top:214px;">137.7 kbps</div>
<div class="t" style="right:465px;top:214px;">272</div>
<div class="t" style="right:365px;top:214px;">269</div>
<div class="t" style="right:245px;top:214px;">0 bps</div>
<div style="left:146px;top:243px;width:996px;height:1px;background:#e9e9e9"></div>
<div style="left:173px;top:229px;width:1px;height:14px;background:#ececec"></div>
<div style="left:273px;top:229px;width:1px;height:14px;background:#ececec"></div>
<div style="left:419px;top:229px;width:1px;height:14px;background:#ececec"></div>
<div style="left:489px;top:229px;width:1px;height:14px;background:#ececec"></div>
<div style="left:539px;top:229px;width:1px;height:14px;background:#ececec"></div>
<div style="left:659px;top:229px;width:1px;height:14px;background:#ececec"></div>
<div style="left:779px;top:229px;width:1px;height:14px;background:#ececec"></div>
<div style="left:879px;top:229px;width:1px;height:14px;background:#ececec"></div>
<div style="left:979px;top:229px;width:1px;height:14px;background:#ececec"></div>
<div style="left:1099px;top:229px;width:1px;height:14px;background:#ececec"></div>
<div class="t" style="left:148px;top:229px;">RS</div>
<div class="t" style="left:192px;top:229px;">ether3</div>
<svg style="position:absolute;left:177px;top:228px" width="14" height="15" viewBox="0 0 14 15"><path d="M0.4 7.5 L3.5 4.3 L4.9 5.5 L3 7.5 L4.9 9.5 L3.5 10.7 Z M13.6 7.5 L10.5 4.3 L9.1 5.5 L11 7.5 L9.1 9.5 L10.5 10.7 Z" fill="#b01840" stroke="#200008" stroke-width="0.7"/><rect x="6" y="2" width="2" height="4" fill="#000"/><rect x="6" y="7" width="2" height="1" fill="#000"/><rect x="6" y="9" width="2" height="4" fill="#000"/></svg>
<div class="t" style="left:277px;top:229px;">Ethernet</div>
<div class="t" style="right:856px;top:229px;">1500</div>
<div class="t" style="right:806px;top:229px;">1598</div>
<div class="t" style="right:686px;top:229px;">2.6 kbps</div>
<div class="t" style="right:566px;top:229px;">1408 bps</div>
<div class="t" style="right:465px;top:229px;">2</div>
<div class="t" style="right:365px;top:229px;">1</div>
<div class="t" style="right:245px;top:229px;">0 bps</div>
<div style="left:146px;top:258px;width:996px;height:1px;background:#e9e9e9"></div>
<svg style="position:absolute;left:162px;top:248px" width="10" height="9" viewBox="0 0 10 9"><rect x="0.8" y="0.8" width="1.4" height="1.4" fill="#111"/><rect x="0.8" y="5.6" width="1.3" height="2.2" fill="#111"/><rect x="3.8" y="0.8" width="1.4" height="1.4" fill="#111"/><rect x="3.8" y="5.6" width="1.3" height="2.2" fill="#111"/><rect x="6.8" y="0.8" width="1.4" height="1.4" fill="#111"/><rect x="6.8" y="5.6" width="1.3" height="2.2" fill="#111"/></svg>
<div class="t" style="left:174px;top:244px;">LAN - All ports are switched on ether2</div>
<div style="left:146px;top:273px;width:996px;height:1px;background:#e9e9e9"></div>
<div style="left:173px;top:259px;width:1px;height:14px;background:#ececec"></div>
<div style="left:273px;top:259px;width:1px;height:14px;background:#ececec"></div>
<div style="left:419px;top:259px;width:1px;height:14px;background:#ececec"></div>
<div style="left:489px;top:259px;width:1px;height:14px;background:#ececec"></div>
<div style="left:539px;top:259px;width:1px;height:14px;background:#ececec"></div>
<div style="left:659px;top:259px;width:1px;height:14px;background:#ececec"></div>
<div style="left:779px;top:259px;width:1px;height:14px;background:#ececec"></div>
<div style="left:879px;top:259px;width:1px;height:14px;background:#ececec"></div>
<div style="left:979px;top:259px;width:1px;height:14px;background:#ececec"></div>
<div style="left:1099px;top:259px;width:1px;height:14px;background:#ececec"></div>
<div class="t" style="left:148px;top:259px;">RS</div>
<div class="t" style="left:192px;top:259px;">ether2</div>
<svg style="position:absolute;left:177px;top:258px" width="14" height="15" viewBox="0 0 14 15"><path d="M0.4 7.5 L3.5 4.3 L4.9 5.5 L3 7.5 L4.9 9.5 L3.5 10.7 Z M13.6 7.5 L10.5 4.3 L9.1 5.5 L11 7.5 L9.1 9.5 L10.5 10.7 Z" fill="#b01840" stroke="#200008" stroke-width="0.7"/><rect x="6" y="2" width="2" height="4" fill="#000"/><rect x="6" y="7" width="2" height="1" fill="#000"/><rect x="6" y="9" width="2" height="4" fill="#000"/></svg>
<div class="t" style="left:277px;top:259px;">Ethernet</div>
<div class="t" style="right:856px;top:259px;">1500</div>
<div class="t" style="right:806px;top:259px;">1598</div>
<div class="t" style="right:686px;top:259px;">141.7 kbps</div>
<div class="t" style="right:566px;top:259px;">2.9 Mbps</div>
<div class="t" style="right:465px;top:259px;">272</div>
<div class="t" style="right:365px;top:259px;">269</div>
<div class="t" style="right:245px;top:259px;">88.9 kbps</div>
<div style="left:146px;top:288px;width:996px;height:1px;background:#e9e9e9"></div>
<svg style="position:absolute;left:162px;top:278px" width="10" height="9" viewBox="0 0 10 9"><rect x="0.8" y="0.8" width="1.4" height="1.4" fill="#111"/><rect x="0.8" y="5.6" width="1.3" height="2.2" fill="#111"/><rect x="3.8" y="0.8" width="1.4" height="1.4" fill="#111"/><rect x="3.8" y="5.6" width="1.3" height="2.2" fill="#111"/><rect x="6.8" y="0.8" width="1.4" height="1.4" fill="#111"/><rect x="6.8" y="5.6" width="1.3" height="2.2" fill="#111"/></svg>
<div class="t" style="left:174px;top:274px;">WAN</div>
<div style="left:146px;top:303px;width:996px;height:1px;background:#e9e9e9"></div>
<div style="left:173px;top:289px;width:1px;height:14px;background:#ececec"></div>
<div style="left:273px;top:289px;width:1px;height:14px;background:#ececec"></div>
<div style="left:419px;top:289px;width:1px;height:14px;background:#ececec"></div>
<div style="left:489px;top:289px;width:1px;height:14px;background:#ececec"></div>
<div style="left:539px;top:289px;width:1px;height:14px;background:#ececec"></div>
<div style="left:659px;top:289px;width:1px;height:14px;background:#ececec"></div>
<div style="left:779px;top:289px;width:1px;height:14px;background:#ececec"></div>
<div style="left:879px;top:289px;width:1px;height:14px;background:#ececec"></div>
<div style="left:979px;top:289px;width:1px;height:14px;background:#ececec"></div>
<div style="left:1099px;top:289px;width:1px;height:14px;background:#ececec"></div>
<div class="t" style="left:148px;top:289px;">R</div>
<div class="t" style="left:192px;top:289px;">ether1</div>
<svg style="position:absolute;left:177px;top:288px" width="14" height="15" viewBox="0 0 14 15"><path d="M0.4 7.5 L3.5 4.3 L4.9 5.5 L3 7.5 L4.9 9.5 L3.5 10.7 Z M13.6 7.5 L10.5 4.3 L9.1 5.5 L11 7.5 L9.1 9.5 L10.5 10.7 Z" fill="#b01840" stroke="#200008" stroke-width="0.7"/><rect x="6" y="2" width="2" height="4" fill="#000"/><rect x="6" y="7" width="2" height="1" fill="#000"/><rect x="6" y="9" width="2" height="4" fill="#000"/></svg>
<div class="t" style="left:277px;top:289px;">Ethernet</div>
<div class="t" style="right:856px;top:289px;">1500</div>
<div class="t" style="right:806px;top:289px;">1598</div>
<div class="t" style="right:686px;top:289px;">7.2 kbps</div>
<div class="t" style="right:566px;top:289px;">3.9 kbps</div>
<div class="t" style="right:465px;top:289px;">2</div>
<div class="t" style="right:365px;top:289px;">3</div>
<div class="t" style="right:245px;top:289px;">7.1 kbps</div>
<div style="left:146px;top:318px;width:996px;height:1px;background:#e9e9e9"></div>
<svg style="position:absolute;left:162px;top:308px" width="10" height="9" viewBox="0 0 10 9"><rect x="0.8" y="0.8" width="1.4" height="1.4" fill="#111"/><rect x="0.8" y="5.6" width="1.3" height="2.2" fill="#111"/><rect x="3.8" y="0.8" width="1.4" height="1.4" fill="#111"/><rect x="3.8" y="5.6" width="1.3" height="2.2" fill="#111"/><rect x="6.8" y="0.8" width="1.4" height="1.4" fill="#111"/><rect x="6.8" y="5.6" width="1.3" height="2.2" fill="#111"/></svg>
<div class="t" style="left:174px;top:304px;">Bridge LAN-WiFi</div>
<div style="left:146px;top:333px;width:996px;height:1px;background:#e9e9e9"></div>
<div style="left:173px;top:319px;width:1px;height:14px;background:#ececec"></div>
<div style="left:273px;top:319px;width:1px;height:14px;background:#ececec"></div>
<div style="left:419px;top:319px;width:1px;height:14px;background:#ececec"></div>
<div style="left:489px;top:319px;width:1px;height:14px;background:#ececec"></div>
<div style="left:539px;top:319px;width:1px;height:14px;background:#ececec"></div>
<div style="left:659px;top:319px;width:1px;height:14px;background:#ececec"></div>
<div style="left:779px;top:319px;width:1px;height:14px;background:#ececec"></div>
<div style="left:879px;top:319px;width:1px;height:14px;background:#ececec"></div>
<div style="left:979px;top:319px;width:1px;height:14px;background:#ececec"></div>
<div style="left:1099px;top:319px;width:1px;height:14px;background:#ececec"></div>
<div class="t" style="left:148px;top:319px;">R</div>
<div class="t" style="left:192px;top:319px;">bridge1</div>
<svg style="position:absolute;left:177px;top:318px" width="14" height="15" viewBox="0 0 14 15"><path d="M3.5 2 V10 M11.5 2 V10" stroke="#000" stroke-width="1.3"/><path d="M2 4.5 H6 L6.5 5.5 H8.5 L9 4.5 H13" stroke="#000" stroke-width="1.1" fill="none"/><path d="M0.5 7.5 L2.5 5.2 M13.8 7.5 L12 5.2" stroke="#000" stroke-width="0.9"/><path d="M1 11 L3 9.2 H12 L14 11 Z" fill="#6a0c18"/></svg>
<div class="t" style="left:277px;top:319px;">Bridge</div>
<div class="t" style="right:856px;top:319px;">1500</div>
<div class="t" style="right:806px;top:319px;">1598</div>
<div class="t" style="right:686px;top:319px;">88.9 kbps</div>
<div class="t" style="right:566px;top:319px;">11.7 kbps</div>
<div class="t" style="right:465px;top:319px;">10</div>
<div class="t" style="right:365px;top:319px;">8</div>
<div class="t" style="right:245px;top:319px;">0 bps</div>
<svg style="position:absolute;left:262px;top:111px" width="10" height="9" viewBox="0 0 10 9"><path d="M1 1.5 H9" stroke="#808080" stroke-width="1"/><path d="M1.5 1.5 L4.5 7.5" stroke="#808080" stroke-width="1.1"/><path d="M8.5 1.5 L5 7.5" stroke="#fff" stroke-width="1"/></svg>
<div style="left:145px;top:351px;width:998px;height:17px;box-sizing:border-box;border:1px solid #a0a0a0;background:#d8d8d8"></div>
<div style="left:146px;top:352px;width:16px;height:15px;background:#f0f0f0;border-right:1px solid #a0a0a0"></div>
<div style="left:162px;top:352px;width:717px;height:15px;background:#ececec;border-right:1px solid #a8a8a8"></div>
<div style="left:1126px;top:352px;width:16px;height:15px;background:#f0f0f0;border-left:1px solid #c8c8c8"></div>
<svg style="position:absolute;left:146px;top:352px" width="16" height="15" viewBox="0 0 16 15"><path d="M4 7.5 L8 3.5 V11.5 Z M8 6 H11 V9 H8 Z" fill="#000"/></svg>
<svg style="position:absolute;left:1127px;top:352px" width="16" height="15" viewBox="0 0 16 15"><path d="M12 7.5 L8 3.5 V11.5 Z M8 6 H5 V9 H8 Z" fill="#000"/></svg>
<div style="left:145px;top:368px;width:999px;height:21px;box-sizing:border-box;border-left:1px solid #a0a0a0;border-bottom:1px solid #a0a0a0;border-right:1px solid #fff"></div>
<div class="t" style="left:148px;top:371px;">8 items</div>
<div style="left:141px;top:395px;width:1019px;height:422px;background:#000"></div>
<div style="left:142px;top:396px;width:1017px;height:420px;background:#f0f0f0"></div>
<div style="left:142px;top:396px;width:1px;height:420px;background:#fbfbfb"></div>
<div style="left:143px;top:396px;width:1016px;height:22px;background:#4b4bcc"></div>
<div style="left:142px;top:418px;width:1017px;height:1px;background:#fafafa"></div>
<div class="t" style="left:147px;top:402px;color:#ffffff">Firewall</div>
<div style="left:1123px;top:400px;width:15px;height:15px;box-sizing:border-box;border:1px solid #222;background:#fafafa"></div>
<div style="left:1140px;top:400px;width:15px;height:15px;box-sizing:border-box;border:1px solid #222;background:#fafafa"></div>
<svg style="position:absolute;left:1123px;top:400px" width="15" height="15" viewBox="0 0 15 15"><rect x="3.5" y="3.5" width="8" height="8" fill="none" stroke="#222" stroke-width="1"/><rect x="3" y="3" width="9" height="2" fill="#222"/></svg>
<svg style="position:absolute;left:1140px;top:400px" width="15" height="15" viewBox="0 0 15 15"><path d="M4 4 L11 11 M11 4 L4 11" stroke="#222" stroke-width="2"/></svg>
<div style="left:145px;top:442px;width:1011px;height:1px;background:#ffffff"></div>
<div style="left:1155px;top:442px;width:1px;height:371px;background:#a0a0a0"></div>
<div style="left:1156px;top:442px;width:1px;height:371px;background:#ffffff"></div>
<div style="left:147px;top:423px;width:62px;height:19px;background:#d9d9d9;box-sizing:border-box;border-left:1px solid #fff;border-top:1px solid #fff;border-right:1px solid #b4b4b4"></div>
<div class="t" style="left:153px;top:427px;">Filter Rules</div>
<div style="left:209px;top:421px;width:36px;height:22px;background:#f0f0f0;box-sizing:border-box;border-left:1px solid #fff;border-top:1px solid #fff;border-right:1px solid #a0a0a0"></div>
<div class="t" style="left:216px;top:425px;">NAT</div>
<div style="left:245px;top:423px;width:45px;height:19px;background:#d9d9d9;box-sizing:border-box;border-left:1px solid #fff;border-top:1px solid #fff;border-right:1px solid #b4b4b4"></div>
<div class="t" style="left:251px;top:427px;">Mangle</div>
<div style="left:290px;top:423px;width:35px;height:19px;background:#d9d9d9;box-sizing:border-box;border-left:1px solid #fff;border-top:1px solid #fff;border-right:1px solid #b4b4b4"></div>
<div class="t" style="left:296px;top:427px;">Raw</div>
<div style="left:325px;top:423px;width:75px;height:19px;background:#d9d9d9;box-sizing:border-box;border-left:1px solid #fff;border-top:1px solid #fff;border-right:1px solid #b4b4b4"></div>
<div class="t" style="left:331px;top:427px;">Service Ports</div>
<div style="left:400px;top:423px;width:71px;height:19px;background:#d9d9d9;box-sizing:border-box;border-left:1px solid #fff;border-top:1px solid #fff;border-right:1px solid #b4b4b4"></div>
<div class="t" style="left:406px;top:427px;">Connections</div>
<div style="left:471px;top:423px;width:74px;height:19px;background:#d9d9d9;box-sizing:border-box;border-left:1px solid #fff;border-top:1px solid #fff;border-right:1px solid #b4b4b4"></div>
<div class="t" style="left:477px;top:427px;">Address Lists</div>
<div style="left:545px;top:423px;width:90px;height:19px;background:#d9d9d9;box-sizing:border-box;border-left:1px solid #fff;border-top:1px solid #fff;border-right:1px solid #b4b4b4"></div>
<div class="t" style="left:551px;top:427px;">Layer7 Protocols</div>
<div style="left:146px;top:446px;width:23px;height:23px;box-sizing:border-box;border:1px solid #adadad;background:#ededed"></div>
<svg style="position:absolute;left:146px;top:446px" width="23" height="23" viewBox="0 0 23 23"><path d="M11.5 5.5 V17.5 M5.5 11.5 H17.5" stroke="#000" stroke-width="4.5"/><path d="M11.5 6.5 V16.5 M6.5 11.5 H16.5" stroke="#1414d8" stroke-width="2.5"/></svg>
<div style="left:172px;top:446px;width:23px;height:23px;box-sizing:border-box;border:1px solid #adadad;background:#ededed"></div>
<svg style="position:absolute;left:172px;top:446px" width="23" height="23" viewBox="0 0 23 23"><rect x="6.5" y="10.5" width="11" height="3" fill="#f6f6f6" stroke="#9a9a9a"/></svg>
<div style="left:204px;top:446px;width:23px;height:23px;box-sizing:border-box;border:1px solid #adadad;background:#ededed"></div>
<svg style="position:absolute;left:204px;top:446px" width="23" height="23" viewBox="0 0 23 23"><path d="M5.5 12 L7.3 10.2 L10 12.8 L16 6.8 L17.8 8.6 L10 16.4 Z" fill="#f8f8f8" stroke="#9a9a9a" stroke-width="0.9"/></svg>
<div style="left:230px;top:446px;width:23px;height:23px;box-sizing:border-box;border:1px solid #adadad;background:#ededed"></div>
<svg style="position:absolute;left:230px;top:446px" width="23" height="23" viewBox="0 0 23 23"><path d="M6 8 L8 6 L11.5 9.5 L15 6 L17 8 L13.5 11.5 L17 15 L15 17 L11.5 13.5 L8 17 L6 15 L9.5 11.5 Z" fill="#f6f6f6" stroke="#a8a8a8" stroke-width="0.8"/></svg>
<div style="left:262px;top:446px;width:23px;height:23px;box-sizing:border-box;border:1px solid #adadad;background:#ededed"></div>
<svg style="position:absolute;left:262px;top:446px" width="23" height="23" viewBox="0 0 23 23"><path d="M5.5 10 L8 7.5 H17.5 V15.5 H5.5 Z" fill="#f6f6f6" stroke="#777"/><path d="M11 10 H16 M10 12.5 H15" stroke="#777" stroke-dasharray="1 1"/></svg>
<div style="left:294px;top:446px;width:23px;height:23px;box-sizing:border-box;border:1px solid #adadad;background:#ededed"></div>
<svg style="position:absolute;left:294px;top:446px" width="23" height="23" viewBox="0 0 23 23"><path d="M5 6 H18 V8 L13 12 V18 H10 V12 L5 8 Z" fill="#6a7088" stroke="#111" stroke-width="1"/><path d="M7 7 H16" stroke="#aab" stroke-width="1"/></svg>
<div style="left:326px;top:446px;width:108px;height:23px;box-sizing:border-box;border:1px solid #adadad;background:#ededed"></div>
<div class="t" style="left:332px;top:451px;color:#a0a0a0"><b style='letter-spacing:0.6px;font-size:11px'>00</b></div>
<div class="t" style="left:351px;top:451px;color:#a0a0a0">Reset Counters</div>
<div style="left:437px;top:446px;width:122px;height:23px;box-sizing:border-box;border:1px solid #adadad;background:#ededed"></div>
<div class="t" style="left:443px;top:451px;"><b style='letter-spacing:0.6px;font-size:11px'>00</b></div>
<div class="t" style="left:462px;top:451px;">Reset All Counters</div>
<div style="left:1018px;top:451px;width:60px;height:18px;box-sizing:border-box;border:1px solid #a8a8a8;background:#fff"></div>
<div class="t" style="left:1023px;top:454px;color:#a0a0a0;font-style:italic">Find</div>
<div style="left:1085px;top:451px;width:49px;height:18px;box-sizing:border-box;border:1px solid #a8a8a8;background:#fff"></div>
<div class="t" style="left:1088px;top:454px;">all</div>
<div style="left:1135px;top:451px;width:18px;height:18px;box-sizing:border-box;border:1px solid #adadad;background:#ededed"></div>
<svg style="position:absolute;left:1135px;top:451px" width="18" height="18" viewBox="0 0 18 18"><path d="M5 4.5 H13" stroke="#000" stroke-width="1.5"/><path d="M9 6 V10" stroke="#000" stroke-width="3"/><path d="M4.5 9.5 H13.5 L9 14 Z" fill="#000"/></svg>
<div style="left:146px;top:472px;width:1008px;height:320px;background:#fff;box-sizing:border-box;border:1px solid #a0a0a0;border-right:none"></div>
<div style="left:146px;top:472px;width:1008px;height:18px;background:#f0f0f0;box-sizing:border-box;border-top:1px solid #a0a0a0;border-bottom:1px solid #a0a0a0;border-left:1px solid #a0a0a0"></div>
<div style="left:1153px;top:472px;width:1px;height:320px;background:#a0a0a0"></div>
<div style="left:147px;top:473px;width:1006px;height:1px;background:#fcfcfc"></div>
<div style="left:170px;top:473px;width:1px;height:16px;background:#a8a8a8"></div>
<div style="left:171px;top:474px;width:1px;height:15px;background:#fafafa"></div>
<div style="left:192px;top:473px;width:1px;height:16px;background:#a8a8a8"></div>
<div style="left:193px;top:474px;width:1px;height:15px;background:#fafafa"></div>
<div style="left:330px;top:473px;width:1px;height:16px;background:#a8a8a8"></div>
<div style="left:331px;top:474px;width:1px;height:15px;background:#fafafa"></div>
<div style="left:395px;top:473px;width:1px;height:16px;background:#a8a8a8"></div>
<div style="left:396px;top:474px;width:1px;height:15px;background:#fafafa"></div>
<div style="left:521px;top:473px;width:1px;height:16px;background:#a8a8a8"></div>
<div style="left:522px;top:474px;width:1px;height:15px;background:#fafafa"></div>
<div style="left:630px;top:473px;width:1px;height:16px;background:#a8a8a8"></div>
<div style="left:631px;top:474px;width:1px;height:15px;background:#fafafa"></div>
<div style="left:670px;top:473px;width:1px;height:16px;background:#a8a8a8"></div>
<div style="left:671px;top:474px;width:1px;height:15px;background:#fafafa"></div>
<div style="left:730px;top:473px;width:1px;height:16px;background:#a8a8a8"></div>
<div style="left:731px;top:474px;width:1px;height:15px;background:#fafafa"></div>
<div style="left:790px;top:473px;width:1px;height:16px;background:#a8a8a8"></div>
<div style="left:791px;top:474px;width:1px;height:15px;background:#fafafa"></div>
<div style="left:870px;top:473px;width:1px;height:16px;background:#a8a8a8"></div>
<div style="left:871px;top:474px;width:1px;height:15px;background:#fafafa"></div>
<div style="left:959px;top:473px;width:1px;height:16px;background:#a8a8a8"></div>
<div style="left:960px;top:474px;width:1px;height:15px;background:#fafafa"></div>
<div style="left:1019px;top:473px;width:1px;height:16px;background:#a8a8a8"></div>
<div style="left:1020px;top:474px;width:1px;height:15px;background:#fafafa"></div>
<div style="left:1079px;top:473px;width:1px;height:16px;background:#a8a8a8"></div>
<div style="left:1080px;top:474px;width:1px;height:15px;background:#fafafa"></div>
<div style="left:1137px;top:473px;width:1px;height:16px;background:#a8a8a8"></div>
<div style="left:1138px;top:474px;width:1px;height:15px;background:#fafafa"></div>
<div class="t" style="left:156px;top:475px;">#</div>
<div class="t" style="left:195px;top:475px;">Action</div>
<div class="t" style="left:332px;top:475px;">Chain</div>
<div class="t" style="left:398px;top:475px;">Src. Address</div>
<div class="t" style="left:524px;top:475px;">Dst. Address</div>
<div class="t" style="left:633px;top:475px;">Proto</div>
<div class="t" style="left:673px;top:475px;">Src. Port</div>
<div class="t" style="left:733px;top:475px;">Dst. Port</div>
<div class="t" style="left:793px;top:475px;">In. Interface</div>
<div class="t" style="left:872px;top:475px;">Out. Interface</div>
<div class="t" style="left:962px;top:475px;">Bytes</div>
<div class="t" style="left:1022px;top:475px;">Packets</div>
<svg style="position:absolute;left:1138px;top:473px" width="15" height="16" viewBox="0 0 15 16"><path d="M3.0 6 H13.0 L8.0 11 Z" fill="#000"/></svg>
<div style="left:147px;top:504px;width:1006px;height:1px;background:#e9e9e9"></div>
<div style="left:170px;top:490px;width:1px;height:14px;background:#ececec"></div>
<div style="left:192px;top:490px;width:1px;height:14px;background:#ececec"></div>
<div style="left:330px;top:490px;width:1px;height:14px;background:#ececec"></div>
<div style="left:395px;top:490px;width:1px;height:14px;background:#ececec"></div>
<div style="left:521px;top:490px;width:1px;height:14px;background:#ececec"></div>
<div style="left:630px;top:490px;width:1px;height:14px;background:#ececec"></div>
<div style="left:670px;top:490px;width:1px;height:14px;background:#ececec"></div>
<div style="left:730px;top:490px;width:1px;height:14px;background:#ececec"></div>
<div style="left:790px;top:490px;width:1px;height:14px;background:#ececec"></div>
<div style="left:870px;top:490px;width:1px;height:14px;background:#ececec"></div>
<div style="left:959px;top:490px;width:1px;height:14px;background:#ececec"></div>
<div style="left:1019px;top:490px;width:1px;height:14px;background:#ececec"></div>
<div style="left:1079px;top:490px;width:1px;height:14px;background:#ececec"></div>
<div class="t" style="right:1174px;top:490px;">0</div>
<div class="t" style="left:173px;top:490px;"></div>
<div class="t" style="left:211px;top:490px;">masquerade</div>
<svg style="position:absolute;left:196px;top:489px" width="14" height="15" viewBox="0 0 14 15"><path d="M0 5.5 H6.5 M5.5 4 V7" stroke="#3a9a3a" stroke-width="1.1" fill="none"/><path d="M0.5 8.5 H7 M1.5 7 V10" stroke="#1a1ab0" stroke-width="1.1" fill="none"/><path d="M8.5 2 V12 M10.5 2 V12" stroke="#000" stroke-width="1.2"/></svg>
<div class="t" style="left:332px;top:490px;">srcnat</div>
<div class="t" style="left:398px;top:490px;">192.168.128.0/24</div>
<div class="t" style="left:524px;top:490px;">192.168.128.248</div>
<div class="t" style="left:633px;top:490px;">6 (tcp)</div>
<div class="t" style="left:733px;top:490px;">8008</div>
<div class="t" style="left:792px;top:490px;"></div>
<div class="t" style="left:872px;top:490px;">bridge1</div>
<div class="t" style="right:326px;top:490px;">0 B</div>
<div class="t" style="right:265px;top:490px;">0</div>
<div style="left:147px;top:519px;width:1006px;height:1px;background:#e9e9e9"></div>
<svg style="position:absolute;left:163px;top:509px" width="10" height="9" viewBox="0 0 10 9"><rect x="0.8" y="0.8" width="1.4" height="1.4" fill="#111"/><rect x="0.8" y="5.6" width="1.3" height="2.2" fill="#111"/><rect x="3.8" y="0.8" width="1.4" height="1.4" fill="#111"/><rect x="3.8" y="5.6" width="1.3" height="2.2" fill="#111"/><rect x="6.8" y="0.8" width="1.4" height="1.4" fill="#111"/><rect x="6.8" y="5.6" width="1.3" height="2.2" fill="#111"/></svg>
<div class="t" style="left:175px;top:505px;">Masquerade rule</div>
<div style="left:147px;top:534px;width:1006px;height:1px;background:#e9e9e9"></div>
<div style="left:170px;top:520px;width:1px;height:14px;background:#ececec"></div>
<div style="left:192px;top:520px;width:1px;height:14px;background:#ececec"></div>
<div style="left:330px;top:520px;width:1px;height:14px;background:#ececec"></div>
<div style="left:395px;top:520px;width:1px;height:14px;background:#ececec"></div>
<div style="left:521px;top:520px;width:1px;height:14px;background:#ececec"></div>
<div style="left:630px;top:520px;width:1px;height:14px;background:#ececec"></div>
<div style="left:670px;top:520px;width:1px;height:14px;background:#ececec"></div>
<div style="left:730px;top:520px;width:1px;height:14px;background:#ececec"></div>
<div style="left:790px;top:520px;width:1px;height:14px;background:#ececec"></div>
<div style="left:870px;top:520px;width:1px;height:14px;background:#ececec"></div>
<div style="left:959px;top:520px;width:1px;height:14px;background:#ececec"></div>
<div style="left:1019px;top:520px;width:1px;height:14px;background:#ececec"></div>
<div style="left:1079px;top:520px;width:1px;height:14px;background:#ececec"></div>
<div class="t" style="right:1174px;top:520px;">1</div>
<div class="t" style="left:173px;top:520px;"></div>
<div class="t" style="left:211px;top:520px;">masquerade</div>
<svg style="position:absolute;left:196px;top:519px" width="14" height="15" viewBox="0 0 14 15"><path d="M0 5.5 H6.5 M5.5 4 V7" stroke="#3a9a3a" stroke-width="1.1" fill="none"/><path d="M0.5 8.5 H7 M1.5 7 V10" stroke="#1a1ab0" stroke-width="1.1" fill="none"/><path d="M8.5 2 V12 M10.5 2 V12" stroke="#000" stroke-width="1.2"/></svg>
<div class="t" style="left:332px;top:520px;">srcnat</div>
<div class="t" style="left:398px;top:520px;"></div>
<div class="t" style="left:524px;top:520px;"></div>
<div class="t" style="left:633px;top:520px;"></div>
<div class="t" style="left:733px;top:520px;"></div>
<div class="t" style="left:792px;top:520px;"></div>
<div class="t" style="left:872px;top:520px;">pppoe-out1</div>
<div class="t" style="right:326px;top:520px;">16.2 MiB</div>
<div class="t" style="right:265px;top:520px;">110 929</div>
<div style="left:147px;top:549px;width:1006px;height:1px;background:#e9e9e9"></div>
<svg style="position:absolute;left:163px;top:539px" width="10" height="9" viewBox="0 0 10 9"><rect x="0.8" y="0.8" width="1.4" height="1.4" fill="#111"/><rect x="0.8" y="5.6" width="1.3" height="2.2" fill="#111"/><rect x="3.8" y="0.8" width="1.4" height="1.4" fill="#111"/><rect x="3.8" y="5.6" width="1.3" height="2.2" fill="#111"/><rect x="6.8" y="0.8" width="1.4" height="1.4" fill="#111"/><rect x="6.8" y="5.6" width="1.3" height="2.2" fill="#111"/></svg>
<div class="t" style="left:175px;top:535px;">Aquarium</div>
<div style="left:147px;top:564px;width:1006px;height:1px;background:#e9e9e9"></div>
<div style="left:170px;top:550px;width:1px;height:14px;background:#ececec"></div>
<div style="left:192px;top:550px;width:1px;height:14px;background:#ececec"></div>
<div style="left:330px;top:550px;width:1px;height:14px;background:#ececec"></div>
<div style="left:395px;top:550px;width:1px;height:14px;background:#ececec"></div>
<div style="left:521px;top:550px;width:1px;height:14px;background:#ececec"></div>
<div style="left:630px;top:550px;width:1px;height:14px;background:#ececec"></div>
<div style="left:670px;top:550px;width:1px;height:14px;background:#ececec"></div>
<div style="left:730px;top:550px;width:1px;height:14px;background:#ececec"></div>
<div style="left:790px;top:550px;width:1px;height:14px;background:#ececec"></div>
<div style="left:870px;top:550px;width:1px;height:14px;background:#ececec"></div>
<div style="left:959px;top:550px;width:1px;height:14px;background:#ececec"></div>
<div style="left:1019px;top:550px;width:1px;height:14px;background:#ececec"></div>
<div style="left:1079px;top:550px;width:1px;height:14px;background:#ececec"></div>
<div class="t" style="right:1174px;top:550px;">2</div>
<div class="t" style="left:173px;top:550px;"></div>
<div class="t" style="left:211px;top:550px;">dst-nat</div>
<svg style="position:absolute;left:196px;top:549px" width="14" height="15" viewBox="0 0 14 15"><path d="M0 8.5 H4 M2.5 7 V10" stroke="#4a8a5a" stroke-width="1.1" fill="none"/><path d="M5.5 2 V13 M7.5 2 V13" stroke="#000" stroke-width="1.2"/><path d="M9.5 7.5 L12.3 4.7 M10.5 4.5 H12.5 V6.5" stroke="#6a4a7a" stroke-width="1" fill="none"/></svg>
<div class="t" style="left:332px;top:550px;">dstnat</div>
<div class="t" style="left:398px;top:550px;"></div>
<div class="t" style="left:524px;top:550px;"></div>
<div class="t" style="left:633px;top:550px;">6 (tcp)</div>
<div class="t" style="left:733px;top:550px;">8880</div>
<div class="t" style="left:792px;top:550px;">pppoe-out1</div>
<div class="t" style="left:872px;top:550px;"></div>
<div class="t" style="right:326px;top:550px;">2820 B</div>
<div class="t" style="right:265px;top:550px;">49</div>
<div style="left:147px;top:579px;width:1006px;height:1px;background:#e9e9e9"></div>
<svg style="position:absolute;left:163px;top:569px" width="10" height="9" viewBox="0 0 10 9"><rect x="0.8" y="0.8" width="1.4" height="1.4" fill="#111"/><rect x="0.8" y="5.6" width="1.3" height="2.2" fill="#111"/><rect x="3.8" y="0.8" width="1.4" height="1.4" fill="#111"/><rect x="3.8" y="5.6" width="1.3" height="2.2" fill="#111"/><rect x="6.8" y="0.8" width="1.4" height="1.4" fill="#111"/><rect x="6.8" y="5.6" width="1.3" height="2.2" fill="#111"/></svg>
<div class="t" style="left:175px;top:565px;">Foraner</div>
<div style="left:147px;top:594px;width:1006px;height:1px;background:#e9e9e9"></div>
<div style="left:170px;top:580px;width:1px;height:14px;background:#ececec"></div>
<div style="left:192px;top:580px;width:1px;height:14px;background:#ececec"></div>
<div style="left:330px;top:580px;width:1px;height:14px;background:#ececec"></div>
<div style="left:395px;top:580px;width:1px;height:14px;background:#ececec"></div>
<div style="left:521px;top:580px;width:1px;height:14px;background:#ececec"></div>
<div style="left:630px;top:580px;width:1px;height:14px;background:#ececec"></div>
<div style="left:670px;top:580px;width:1px;height:14px;background:#ececec"></div>
<div style="left:730px;top:580px;width:1px;height:14px;background:#ececec"></div>
<div style="left:790px;top:580px;width:1px;height:14px;background:#ececec"></div>
<div style="left:870px;top:580px;width:1px;height:14px;background:#ececec"></div>
<div style="left:959px;top:580px;width:1px;height:14px;background:#ececec"></div>
<div style="left:1019px;top:580px;width:1px;height:14px;background:#ececec"></div>
<div style="left:1079px;top:580px;width:1px;height:14px;background:#ececec"></div>
<div class="t" style="right:1174px;top:580px;">3</div>
<div class="t" style="left:173px;top:580px;"></div>
<div class="t" style="left:211px;top:580px;">dst-nat</div>
<svg style="position:absolute;left:196px;top:579px" width="14" height="15" viewBox="0 0 14 15"><path d="M0 8.5 H4 M2.5 7 V10" stroke="#4a8a5a" stroke-width="1.1" fill="none"/><path d="M5.5 2 V13 M7.5 2 V13" stroke="#000" stroke-width="1.2"/><path d="M9.5 7.5 L12.3 4.7 M10.5 4.5 H12.5 V6.5" stroke="#6a4a7a" stroke-width="1" fill="none"/></svg>
<div class="t" style="left:332px;top:580px;">dstnat</div>
<div class="t" style="left:398px;top:580px;"></div>
<div class="t" style="left:524px;top:580px;"></div>
<div class="t" style="left:633px;top:580px;">6 (tcp)</div>
<div class="t" style="left:733px;top:580px;">8080</div>
<div class="t" style="left:792px;top:580px;">pppoe-out1</div>
<div class="t" style="left:872px;top:580px;"></div>
<div class="t" style="right:326px;top:580px;">1136 B</div>
<div class="t" style="right:265px;top:580px;">23</div>
<div style="left:147px;top:609px;width:1006px;height:1px;background:#e9e9e9"></div>
<svg style="position:absolute;left:163px;top:599px" width="10" height="9" viewBox="0 0 10 9"><rect x="0.8" y="0.8" width="1.4" height="1.4" fill="#111"/><rect x="0.8" y="5.6" width="1.3" height="2.2" fill="#111"/><rect x="3.8" y="0.8" width="1.4" height="1.4" fill="#111"/><rect x="3.8" y="5.6" width="1.3" height="2.2" fill="#111"/><rect x="6.8" y="0.8" width="1.4" height="1.4" fill="#111"/><rect x="6.8" y="5.6" width="1.3" height="2.2" fill="#111"/></svg>
<div class="t" style="left:175px;top:595px;">IP Camera</div>
<div style="left:147px;top:624px;width:1006px;height:1px;background:#e9e9e9"></div>
<div style="left:170px;top:610px;width:1px;height:14px;background:#ececec"></div>
<div style="left:192px;top:610px;width:1px;height:14px;background:#ececec"></div>
<div style="left:330px;top:610px;width:1px;height:14px;background:#ececec"></div>
<div style="left:395px;top:610px;width:1px;height:14px;background:#ececec"></div>
<div style="left:521px;top:610px;width:1px;height:14px;background:#ececec"></div>
<div style="left:630px;top:610px;width:1px;height:14px;background:#ececec"></div>
<div style="left:670px;top:610px;width:1px;height:14px;background:#ececec"></div>
<div style="left:730px;top:610px;width:1px;height:14px;background:#ececec"></div>
<div style="left:790px;top:610px;width:1px;height:14px;background:#ececec"></div>
<div style="left:870px;top:610px;width:1px;height:14px;background:#ececec"></div>
<div style="left:959px;top:610px;width:1px;height:14px;background:#ececec"></div>
<div style="left:1019px;top:610px;width:1px;height:14px;background:#ececec"></div>
<div style="left:1079px;top:610px;width:1px;height:14px;background:#ececec"></div>
<div class="t" style="right:1174px;top:610px;">4</div>
<div class="t" style="left:173px;top:610px;"></div>
<div class="t" style="left:211px;top:610px;">dst-nat</div>
<svg style="position:absolute;left:196px;top:609px" width="14" height="15" viewBox="0 0 14 15"><path d="M0 8.5 H4 M2.5 7 V10" stroke="#4a8a5a" stroke-width="1.1" fill="none"/><path d="M5.5 2 V13 M7.5 2 V13" stroke="#000" stroke-width="1.2"/><path d="M9.5 7.5 L12.3 4.7 M10.5 4.5 H12.5 V6.5" stroke="#6a4a7a" stroke-width="1" fill="none"/></svg>
<div class="t" style="left:332px;top:610px;">dstnat</div>
<div class="t" style="left:398px;top:610px;"></div>
<div class="t" style="left:524px;top:610px;"></div>
<div class="t" style="left:633px;top:610px;">6 (tcp)</div>
<div class="t" style="left:733px;top:610px;">8554</div>
<div class="t" style="left:792px;top:610px;">pppoe-out1</div>
<div class="t" style="left:872px;top:610px;"></div>
<div class="t" style="right:326px;top:610px;">0 B</div>
<div class="t" style="right:265px;top:610px;">0</div>
<div style="left:147px;top:639px;width:1006px;height:1px;background:#e9e9e9"></div>
<div style="left:170px;top:625px;width:1px;height:14px;background:#ececec"></div>
<div style="left:192px;top:625px;width:1px;height:14px;background:#ececec"></div>
<div style="left:330px;top:625px;width:1px;height:14px;background:#ececec"></div>
<div style="left:395px;top:625px;width:1px;height:14px;background:#ececec"></div>
<div style="left:521px;top:625px;width:1px;height:14px;background:#ececec"></div>
<div style="left:630px;top:625px;width:1px;height:14px;background:#ececec"></div>
<div style="left:670px;top:625px;width:1px;height:14px;background:#ececec"></div>
<div style="left:730px;top:625px;width:1px;height:14px;background:#ececec"></div>
<div style="left:790px;top:625px;width:1px;height:14px;background:#ececec"></div>
<div style="left:870px;top:625px;width:1px;height:14px;background:#ececec"></div>
<div style="left:959px;top:625px;width:1px;height:14px;background:#ececec"></div>
<div style="left:1019px;top:625px;width:1px;height:14px;background:#ececec"></div>
<div style="left:1079px;top:625px;width:1px;height:14px;background:#ececec"></div>
<div class="t" style="right:1174px;top:625px;">5</div>
<div class="t" style="left:173px;top:625px;"></div>
<div class="t" style="left:211px;top:625px;">dst-nat</div>
<svg style="position:absolute;left:196px;top:624px" width="14" height="15" viewBox="0 0 14 15"><path d="M0 8.5 H4 M2.5 7 V10" stroke="#4a8a5a" stroke-width="1.1" fill="none"/><path d="M5.5 2 V13 M7.5 2 V13" stroke="#000" stroke-width="1.2"/><path d="M9.5 7.5 L12.3 4.7 M10.5 4.5 H12.5 V6.5" stroke="#6a4a7a" stroke-width="1" fill="none"/></svg>
<div class="t" style="left:332px;top:625px;">dstnat</div>
<div class="t" style="left:398px;top:625px;"></div>
<div class="t" style="left:524px;top:625px;"></div>
<div class="t" style="left:633px;top:625px;">6 (tcp)</div>
<div class="t" style="left:733px;top:625px;">8000</div>
<div class="t" style="left:792px;top:625px;">pppoe-out1</div>
<div class="t" style="left:872px;top:625px;"></div>
<div class="t" style="right:326px;top:625px;">2640 B</div>
<div class="t" style="right:265px;top:625px;">44</div>
<div style="left:147px;top:654px;width:1006px;height:1px;background:#e9e9e9"></div>
<div style="left:170px;top:640px;width:1px;height:14px;background:#ececec"></div>
<div style="left:192px;top:640px;width:1px;height:14px;background:#ececec"></div>
<div style="left:330px;top:640px;width:1px;height:14px;background:#ececec"></div>
<div style="left:395px;top:640px;width:1px;height:14px;background:#ececec"></div>
<div style="left:521px;top:640px;width:1px;height:14px;background:#ececec"></div>
<div style="left:630px;top:640px;width:1px;height:14px;background:#ececec"></div>
<div style="left:670px;top:640px;width:1px;height:14px;background:#ececec"></div>
<div style="left:730px;top:640px;width:1px;height:14px;background:#ececec"></div>
<div style="left:790px;top:640px;width:1px;height:14px;background:#ececec"></div>
<div style="left:870px;top:640px;width:1px;height:14px;background:#ececec"></div>
<div style="left:959px;top:640px;width:1px;height:14px;background:#ececec"></div>
<div style="left:1019px;top:640px;width:1px;height:14px;background:#ececec"></div>
<div style="left:1079px;top:640px;width:1px;height:14px;background:#ececec"></div>
<div class="t" style="right:1174px;top:640px;">6</div>
<div class="t" style="left:173px;top:640px;"></div>
<div class="t" style="left:211px;top:640px;">dst-nat</div>
<svg style="position:absolute;left:196px;top:639px" width="14" height="15" viewBox="0 0 14 15"><path d="M0 8.5 H4 M2.5 7 V10" stroke="#4a8a5a" stroke-width="1.1" fill="none"/><path d="M5.5 2 V13 M7.5 2 V13" stroke="#000" stroke-width="1.2"/><path d="M9.5 7.5 L12.3 4.7 M10.5 4.5 H12.5 V6.5" stroke="#6a4a7a" stroke-width="1" fill="none"/></svg>
<div class="t" style="left:332px;top:640px;">dstnat</div>
<div class="t" style="left:398px;top:640px;"></div>
<div class="t" style="left:524px;top:640px;"></div>
<div class="t" style="left:633px;top:640px;">6 (tcp)</div>
<div class="t" style="left:733px;top:640px;">8282</div>
<div class="t" style="left:792px;top:640px;">pppoe-out1</div>
<div class="t" style="left:872px;top:640px;"></div>
<div class="t" style="right:326px;top:640px;">0 B</div>
<div class="t" style="right:265px;top:640px;">0</div>
<div style="left:147px;top:669px;width:1006px;height:1px;background:#e9e9e9"></div>
<svg style="position:absolute;left:163px;top:659px" width="10" height="9" viewBox="0 0 10 9"><rect x="0.8" y="0.8" width="1.4" height="1.4" fill="#111"/><rect x="0.8" y="5.6" width="1.3" height="2.2" fill="#111"/><rect x="3.8" y="0.8" width="1.4" height="1.4" fill="#111"/><rect x="3.8" y="5.6" width="1.3" height="2.2" fill="#111"/><rect x="6.8" y="0.8" width="1.4" height="1.4" fill="#111"/><rect x="6.8" y="5.6" width="1.3" height="2.2" fill="#111"/></svg>
<div class="t" style="left:175px;top:655px;">NVR</div>
<div style="left:147px;top:684px;width:1006px;height:1px;background:#e9e9e9"></div>
<div style="left:170px;top:670px;width:1px;height:14px;background:#ececec"></div>
<div style="left:192px;top:670px;width:1px;height:14px;background:#ececec"></div>
<div style="left:330px;top:670px;width:1px;height:14px;background:#ececec"></div>
<div style="left:395px;top:670px;width:1px;height:14px;background:#ececec"></div>
<div style="left:521px;top:670px;width:1px;height:14px;background:#ececec"></div>
<div style="left:630px;top:670px;width:1px;height:14px;background:#ececec"></div>
<div style="left:670px;top:670px;width:1px;height:14px;background:#ececec"></div>
<div style="left:730px;top:670px;width:1px;height:14px;background:#ececec"></div>
<div style="left:790px;top:670px;width:1px;height:14px;background:#ececec"></div>
<div style="left:870px;top:670px;width:1px;height:14px;background:#ececec"></div>
<div style="left:959px;top:670px;width:1px;height:14px;background:#ececec"></div>
<div style="left:1019px;top:670px;width:1px;height:14px;background:#ececec"></div>
<div style="left:1079px;top:670px;width:1px;height:14px;background:#ececec"></div>
<div class="t" style="right:1174px;top:670px;">7</div>
<div class="t" style="left:173px;top:670px;"></div>
<div class="t" style="left:211px;top:670px;">dst-nat</div>
<svg style="position:absolute;left:196px;top:669px" width="14" height="15" viewBox="0 0 14 15"><path d="M0 8.5 H4 M2.5 7 V10" stroke="#4a8a5a" stroke-width="1.1" fill="none"/><path d="M5.5 2 V13 M7.5 2 V13" stroke="#000" stroke-width="1.2"/><path d="M9.5 7.5 L12.3 4.7 M10.5 4.5 H12.5 V6.5" stroke="#6a4a7a" stroke-width="1" fill="none"/></svg>
<div class="t" style="left:332px;top:670px;">dstnat</div>
<div class="t" style="left:398px;top:670px;"></div>
<div class="t" style="left:524px;top:670px;"></div>
<div class="t" style="left:633px;top:670px;">6 (tcp)</div>
<div class="t" style="left:733px;top:670px;">8066</div>
<div class="t" style="left:792px;top:670px;">pppoe-out1</div>
<div class="t" style="left:872px;top:670px;"></div>
<div class="t" style="right:326px;top:670px;">0 B</div>
<div class="t" style="right:265px;top:670px;">0</div>
<div style="left:147px;top:699px;width:1006px;height:1px;background:#e9e9e9"></div>
<div style="left:170px;top:685px;width:1px;height:14px;background:#ececec"></div>
<div style="left:192px;top:685px;width:1px;height:14px;background:#ececec"></div>
<div style="left:330px;top:685px;width:1px;height:14px;background:#ececec"></div>
<div style="left:395px;top:685px;width:1px;height:14px;background:#ececec"></div>
<div style="left:521px;top:685px;width:1px;height:14px;background:#ececec"></div>
<div style="left:630px;top:685px;width:1px;height:14px;background:#ececec"></div>
<div style="left:670px;top:685px;width:1px;height:14px;background:#ececec"></div>
<div style="left:730px;top:685px;width:1px;height:14px;background:#ececec"></div>
<div style="left:790px;top:685px;width:1px;height:14px;background:#ececec"></div>
<div style="left:870px;top:685px;width:1px;height:14px;background:#ececec"></div>
<div style="left:959px;top:685px;width:1px;height:14px;background:#ececec"></div>
<div style="left:1019px;top:685px;width:1px;height:14px;background:#ececec"></div>
<div style="left:1079px;top:685px;width:1px;height:14px;background:#ececec"></div>
<div class="t" style="right:1174px;top:685px;">8</div>
<div class="t" style="left:173px;top:685px;"></div>
<div class="t" style="left:211px;top:685px;">dst-nat</div>
<svg style="position:absolute;left:196px;top:684px" width="14" height="15" viewBox="0 0 14 15"><path d="M0 8.5 H4 M2.5 7 V10" stroke="#4a8a5a" stroke-width="1.1" fill="none"/><path d="M5.5 2 V13 M7.5 2 V13" stroke="#000" stroke-width="1.2"/><path d="M9.5 7.5 L12.3 4.7 M10.5 4.5 H12.5 V6.5" stroke="#6a4a7a" stroke-width="1" fill="none"/></svg>
<div class="t" style="left:332px;top:685px;">dstnat</div>
<div class="t" style="left:398px;top:685px;"></div>
<div class="t" style="left:524px;top:685px;"></div>
<div class="t" style="left:633px;top:685px;">6 (tcp)</div>
<div class="t" style="left:733px;top:685px;">8101</div>
<div class="t" style="left:792px;top:685px;">pppoe-out1</div>
<div class="t" style="left:872px;top:685px;"></div>
<div class="t" style="right:326px;top:685px;">0 B</div>
<div class="t" style="right:265px;top:685px;">0</div>
<div style="left:147px;top:714px;width:1006px;height:1px;background:#e9e9e9"></div>
<div style="left:170px;top:700px;width:1px;height:14px;background:#ececec"></div>
<div style="left:192px;top:700px;width:1px;height:14px;background:#ececec"></div>
<div style="left:330px;top:700px;width:1px;height:14px;background:#ececec"></div>
<div style="left:395px;top:700px;width:1px;height:14px;background:#ececec"></div>
<div style="left:521px;top:700px;width:1px;height:14px;background:#ececec"></div>
<div style="left:630px;top:700px;width:1px;height:14px;background:#ececec"></div>
<div style="left:670px;top:700px;width:1px;height:14px;background:#ececec"></div>
<div style="left:730px;top:700px;width:1px;height:14px;background:#ececec"></div>
<div style="left:790px;top:700px;width:1px;height:14px;background:#ececec"></div>
<div style="left:870px;top:700px;width:1px;height:14px;background:#ececec"></div>
<div style="left:959px;top:700px;width:1px;height:14px;background:#ececec"></div>
<div style="left:1019px;top:700px;width:1px;height:14px;background:#ececec"></div>
<div style="left:1079px;top:700px;width:1px;height:14px;background:#ececec"></div>
<div class="t" style="right:1174px;top:700px;">9</div>
<div class="t" style="left:173px;top:700px;"></div>
<div class="t" style="left:211px;top:700px;">dst-nat</div>
<svg style="position:absolute;left:196px;top:699px" width="14" height="15" viewBox="0 0 14 15"><path d="M0 8.5 H4 M2.5 7 V10" stroke="#4a8a5a" stroke-width="1.1" fill="none"/><path d="M5.5 2 V13 M7.5 2 V13" stroke="#000" stroke-width="1.2"/><path d="M9.5 7.5 L12.3 4.7 M10.5 4.5 H12.5 V6.5" stroke="#6a4a7a" stroke-width="1" fill="none"/></svg>
<div class="t" style="left:332px;top:700px;">dstnat</div>
<div class="t" style="left:398px;top:700px;"></div>
<div class="t" style="left:524px;top:700px;"></div>
<div class="t" style="left:633px;top:700px;">6 (tcp)</div>
<div class="t" style="left:733px;top:700px;">8555</div>
<div class="t" style="left:792px;top:700px;">pppoe-out1</div>
<div class="t" style="left:872px;top:700px;"></div>
<div class="t" style="right:326px;top:700px;">0 B</div>
<div class="t" style="right:265px;top:700px;">0</div>
<div style="left:147px;top:729px;width:1006px;height:1px;background:#e9e9e9"></div>
<svg style="position:absolute;left:163px;top:719px" width="10" height="9" viewBox="0 0 10 9"><rect x="0.8" y="0.8" width="1.4" height="1.4" fill="#111"/><rect x="0.8" y="5.6" width="1.3" height="2.2" fill="#111"/><rect x="3.8" y="0.8" width="1.4" height="1.4" fill="#111"/><rect x="3.8" y="5.6" width="1.3" height="2.2" fill="#111"/><rect x="6.8" y="0.8" width="1.4" height="1.4" fill="#111"/><rect x="6.8" y="5.6" width="1.3" height="2.2" fill="#111"/></svg>
<div class="t" style="left:175px;top:715px;">IP Camera VstarCam</div>
<div style="left:147px;top:744px;width:1006px;height:1px;background:#e9e9e9"></div>
<div style="left:170px;top:730px;width:1px;height:14px;background:#ececec"></div>
<div style="left:192px;top:730px;width:1px;height:14px;background:#ececec"></div>
<div style="left:330px;top:730px;width:1px;height:14px;background:#ececec"></div>
<div style="left:395px;top:730px;width:1px;height:14px;background:#ececec"></div>
<div style="left:521px;top:730px;width:1px;height:14px;background:#ececec"></div>
<div style="left:630px;top:730px;width:1px;height:14px;background:#ececec"></div>
<div style="left:670px;top:730px;width:1px;height:14px;background:#ececec"></div>
<div style="left:730px;top:730px;width:1px;height:14px;background:#ececec"></div>
<div style="left:790px;top:730px;width:1px;height:14px;background:#ececec"></div>
<div style="left:870px;top:730px;width:1px;height:14px;background:#ececec"></div>
<div style="left:959px;top:730px;width:1px;height:14px;background:#ececec"></div>
<div style="left:1019px;top:730px;width:1px;height:14px;background:#ececec"></div>
<div style="left:1079px;top:730px;width:1px;height:14px;background:#ececec"></div>
<div class="t" style="right:1174px;top:730px;">10</div>
<div class="t" style="left:173px;top:730px;"></div>
<div class="t" style="left:211px;top:730px;">dst-nat</div>
<svg style="position:absolute;left:196px;top:729px" width="14" height="15" viewBox="0 0 14 15"><path d="M0 8.5 H4 M2.5 7 V10" stroke="#4a8a5a" stroke-width="1.1" fill="none"/><path d="M5.5 2 V13 M7.5 2 V13" stroke="#000" stroke-width="1.2"/><path d="M9.5 7.5 L12.3 4.7 M10.5 4.5 H12.5 V6.5" stroke="#6a4a7a" stroke-width="1" fill="none"/></svg>
<div class="t" style="left:332px;top:730px;">dstnat</div>
<div class="t" style="left:398px;top:730px;"></div>
<div class="t" style="left:524px;top:730px;"></div>
<div class="t" style="left:633px;top:730px;">6 (tcp)</div>
<div class="t" style="left:733px;top:730px;">8008</div>
<div class="t" style="left:792px;top:730px;">pppoe-out1</div>
<div class="t" style="left:872px;top:730px;"></div>
<div class="t" style="right:326px;top:730px;">5.3 KiB</div>
<div class="t" style="right:265px;top:730px;">104</div>
<div style="left:147px;top:759px;width:1006px;height:1px;background:#e9e9e9"></div>
<div style="left:170px;top:745px;width:1px;height:14px;background:#ececec"></div>
<div style="left:192px;top:745px;width:1px;height:14px;background:#ececec"></div>
<div style="left:330px;top:745px;width:1px;height:14px;background:#ececec"></div>
<div style="left:395px;top:745px;width:1px;height:14px;background:#ececec"></div>
<div style="left:521px;top:745px;width:1px;height:14px;background:#ececec"></div>
<div style="left:630px;top:745px;width:1px;height:14px;background:#ececec"></div>
<div style="left:670px;top:745px;width:1px;height:14px;background:#ececec"></div>
<div style="left:730px;top:745px;width:1px;height:14px;background:#ececec"></div>
<div style="left:790px;top:745px;width:1px;height:14px;background:#ececec"></div>
<div style="left:870px;top:745px;width:1px;height:14px;background:#ececec"></div>
<div style="left:959px;top:745px;width:1px;height:14px;background:#ececec"></div>
<div style="left:1019px;top:745px;width:1px;height:14px;background:#ececec"></div>
<div style="left:1079px;top:745px;width:1px;height:14px;background:#ececec"></div>
<div class="t" style="right:1174px;top:745px;">11</div>
<div class="t" style="left:173px;top:745px;"></div>
<div class="t" style="left:211px;top:745px;">dst-nat</div>
<svg style="position:absolute;left:196px;top:744px" width="14" height="15" viewBox="0 0 14 15"><path d="M0 8.5 H4 M2.5 7 V10" stroke="#4a8a5a" stroke-width="1.1" fill="none"/><path d="M5.5 2 V13 M7.5 2 V13" stroke="#000" stroke-width="1.2"/><path d="M9.5 7.5 L12.3 4.7 M10.5 4.5 H12.5 V6.5" stroke="#6a4a7a" stroke-width="1" fill="none"/></svg>
<div class="t" style="left:332px;top:745px;">dstnat</div>
<div class="t" style="left:398px;top:745px;"></div>
<div class="t" style="left:524px;top:745px;"></div>
<div class="t" style="left:633px;top:745px;">6 (tcp)</div>
<div class="t" style="left:733px;top:745px;">8080</div>
<div class="t" style="left:792px;top:745px;">pppoe-out1</div>
<div class="t" style="left:872px;top:745px;"></div>
<div class="t" style="right:326px;top:745px;">0 B</div>
<div class="t" style="right:265px;top:745px;">0</div>
<div style="left:147px;top:774px;width:1006px;height:1px;background:#e9e9e9"></div>
<div style="left:170px;top:760px;width:1px;height:14px;background:#ececec"></div>
<div style="left:192px;top:760px;width:1px;height:14px;background:#ececec"></div>
<div style="left:330px;top:760px;width:1px;height:14px;background:#ececec"></div>
<div style="left:395px;top:760px;width:1px;height:14px;background:#ececec"></div>
<div style="left:521px;top:760px;width:1px;height:14px;background:#ececec"></div>
<div style="left:630px;top:760px;width:1px;height:14px;background:#ececec"></div>
<div style="left:670px;top:760px;width:1px;height:14px;background:#ececec"></div>
<div style="left:730px;top:760px;width:1px;height:14px;background:#ececec"></div>
<div style="left:790px;top:760px;width:1px;height:14px;background:#ececec"></div>
<div style="left:870px;top:760px;width:1px;height:14px;background:#ececec"></div>
<div style="left:959px;top:760px;width:1px;height:14px;background:#ececec"></div>
<div style="left:1019px;top:760px;width:1px;height:14px;background:#ececec"></div>
<div style="left:1079px;top:760px;width:1px;height:14px;background:#ececec"></div>
<div class="t" style="right:1174px;top:760px;">12</div>
<div class="t" style="left:173px;top:760px;"></div>
<div class="t" style="left:211px;top:760px;">dst-nat</div>
<svg style="position:absolute;left:196px;top:759px" width="14" height="15" viewBox="0 0 14 15"><path d="M0 8.5 H4 M2.5 7 V10" stroke="#4a8a5a" stroke-width="1.1" fill="none"/><path d="M5.5 2 V13 M7.5 2 V13" stroke="#000" stroke-width="1.2"/><path d="M9.5 7.5 L12.3 4.7 M10.5 4.5 H12.5 V6.5" stroke="#6a4a7a" stroke-width="1" fill="none"/></svg>
<div class="t" style="left:332px;top:760px;">dstnat</div>
<div class="t" style="left:398px;top:760px;"></div>
<div class="t" style="left:524px;top:760px;"></div>
<div class="t" style="left:633px;top:760px;">6 (tcp)</div>
<div class="t" style="left:733px;top:760px;">8080</div>
<div class="t" style="left:792px;top:760px;">pppoe-out1</div>
<div class="t" style="left:872px;top:760px;"></div>
<div class="t" style="right:326px;top:760px;">0 B</div>
<div class="t" style="right:265px;top:760px;">0</div>
<div style="left:147px;top:789px;width:1006px;height:1px;background:#e9e9e9"></div>
<div style="left:170px;top:775px;width:1px;height:14px;background:#ececec"></div>
<div style="left:192px;top:775px;width:1px;height:14px;background:#ececec"></div>
<div style="left:330px;top:775px;width:1px;height:14px;background:#ececec"></div>
<div style="left:395px;top:775px;width:1px;height:14px;background:#ececec"></div>
<div style="left:521px;top:775px;width:1px;height:14px;background:#ececec"></div>
<div style="left:630px;top:775px;width:1px;height:14px;background:#ececec"></div>
<div style="left:670px;top:775px;width:1px;height:14px;background:#ececec"></div>
<div style="left:730px;top:775px;width:1px;height:14px;background:#ececec"></div>
<div style="left:790px;top:775px;width:1px;height:14px;background:#ececec"></div>
<div style="left:870px;top:775px;width:1px;height:14px;background:#ececec"></div>
<div style="left:959px;top:775px;width:1px;height:14px;background:#ececec"></div>
<div style="left:1019px;top:775px;width:1px;height:14px;background:#ececec"></div>
<div style="left:1079px;top:775px;width:1px;height:14px;background:#ececec"></div>
<div class="t" style="right:1174px;top:775px;color:#8a8a8a">13</div>
<div class="t" style="left:173px;top:775px;color:#8a8a8a">X</div>
<div class="t" style="left:211px;top:775px;color:#8a8a8a">masquerade</div>
<svg style="position:absolute;left:196px;top:774px" width="14" height="15" viewBox="0 0 14 15"><path d="M0 5.5 H6.5 M5.5 4 V7" stroke="#a0a0a0" stroke-width="1.1" fill="none"/><path d="M0.5 8.5 H7 M1.5 7 V10" stroke="#a0a0a0" stroke-width="1.1" fill="none"/><path d="M8.5 2 V12 M10.5 2 V12" stroke="#909090" stroke-width="1.2"/></svg>
<div class="t" style="left:332px;top:775px;color:#8a8a8a">srcnat</div>
<div class="t" style="left:398px;top:775px;color:#8a8a8a">192.168.128.0/24</div>
<div class="t" style="left:524px;top:775px;color:#8a8a8a">192.168.128.199</div>
<div class="t" style="left:633px;top:775px;color:#8a8a8a">6 (tcp)</div>
<div class="t" style="left:733px;top:775px;color:#8a8a8a">8880</div>
<div class="t" style="left:792px;top:775px;color:#8a8a8a"></div>
<div class="t" style="left:872px;top:775px;color:#8a8a8a">bridge1</div>
<div class="t" style="right:326px;top:775px;color:#8a8a8a">0 B</div>
<div class="t" style="right:265px;top:775px;color:#8a8a8a">0</div>
<div style="left:146px;top:792px;width:1009px;height:21px;box-sizing:border-box;border-left:1px solid #a0a0a0;border-bottom:1px solid #a0a0a0;border-right:1px solid #fff"></div>
<div class="t" style="left:149px;top:794px;">14 items</div>
<div style="left:147px;top:485px;width:969px;height:23px;box-sizing:border-box;border:2px solid #2a9a4a"></div>
<div style="left:148px;top:726px;width:951px;height:21px;box-sizing:border-box;border:2px solid #2a9a4a"></div>
</body></html>
